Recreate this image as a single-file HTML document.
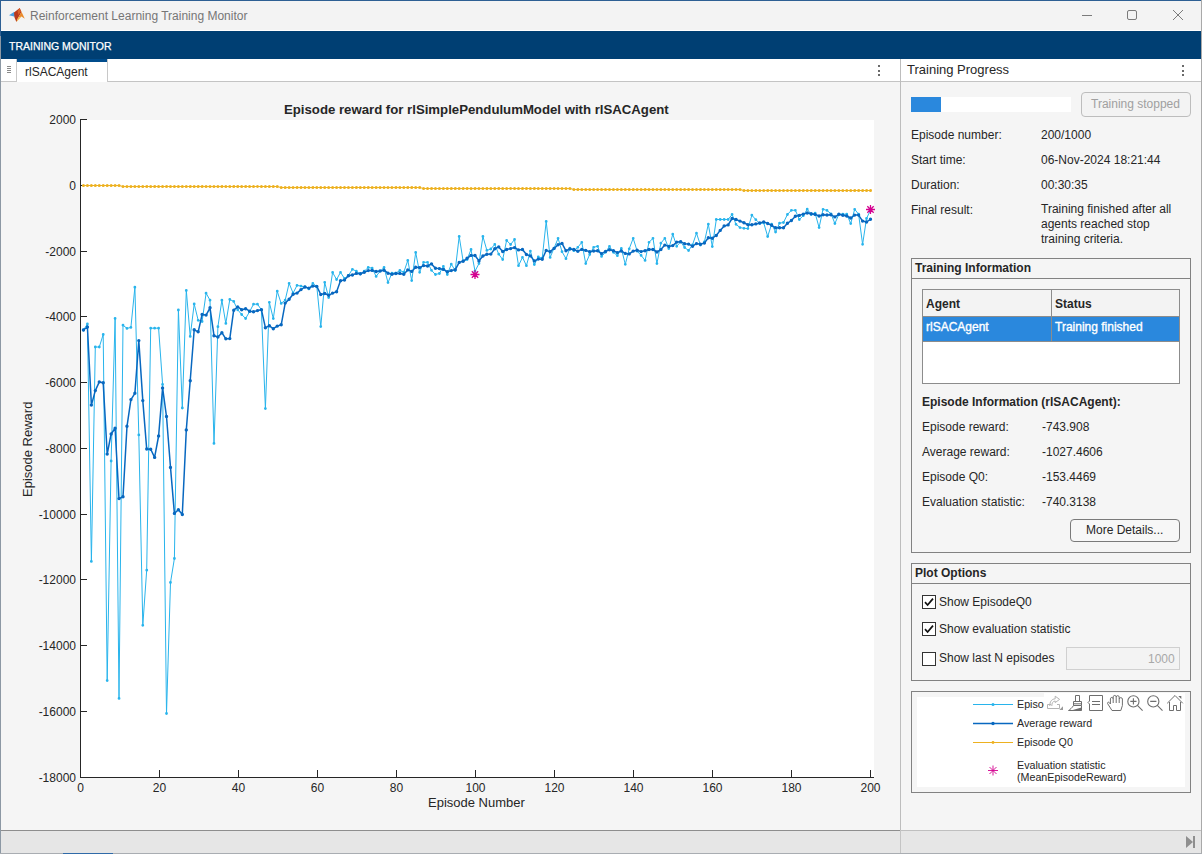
<!DOCTYPE html>
<html><head><meta charset="utf-8">
<style>
*{margin:0;padding:0;box-sizing:border-box}
html,body{width:1202px;height:854px;overflow:hidden;background:#f3f3f3;font-family:"Liberation Sans",sans-serif;color:#262626}
.a{position:absolute}
.t{position:absolute;white-space:nowrap;line-height:1}
.f12{font-size:12px}
.b{font-weight:bold}
</style></head><body>
<!-- window border -->
<div class="a" style="left:0;top:0;width:1202px;height:1px;background:#2d5f93"></div>
<div class="a" style="left:0;top:0;width:1px;height:854px;background:#8c98a4"></div>
<div class="a" style="left:0;top:0;width:1px;height:36px;background:#2d5f93"></div>
<div class="a" style="left:1201px;top:0;width:1px;height:854px;background:#a9a9a9"></div>
<!-- title bar -->
<div class="a" style="left:1px;top:1px;width:1200px;height:29px;background:#f3f3f3"></div>
<div class="a" style="left:1px;top:30px;width:1200px;height:1px;background:#ffffff"></div>
<svg class="a" style="left:0;top:0" width="30" height="30" viewBox="0 0 30 30">
 <path d="M9 15.3L14 12L16 13.8L15 16.8Z" fill="#4a9ee0"/>
 <path d="M14 12.5L19.7 8L21.5 12L18 18L16.4 22L14.5 17.5Z" fill="#b9391d"/>
 <path d="M19.7 8L24.8 18.7L21.5 16.5L18 18L21.5 12Z" fill="#ea8a2b"/>
 <path d="M16.4 22L18 18L21.5 16.5Z" fill="#f6b836"/>
 <path d="M17.5 11L19.7 8L20.8 11.5L18.5 15Z" fill="#d9622a"/>
</svg>
<div class="t f12" style="left:30px;top:10px;color:#767676">Reinforcement Learning Training Monitor</div>
<!-- window controls -->
<div class="a" style="left:1082px;top:15px;width:10px;height:1px;background:#7b7b7b"></div>
<div class="a" style="left:1127px;top:10px;width:10px;height:10px;border:1px solid #7b7b7b;border-radius:2px"></div>
<svg class="a" style="left:1172px;top:9px" width="12" height="12" viewBox="0 0 12 12"><path d="M1 1 L11 11 M11 1 L1 11" stroke="#7b7b7b" stroke-width="1"/></svg>
<!-- toolstrip band -->
<div class="a" style="left:1px;top:31px;width:1200px;height:28px;background:#003f73"></div>
<div class="t" style="left:9px;top:40.6px;font-size:10.5px;color:#ffffff;-webkit-text-stroke:0.25px #fff">TRAINING MONITOR</div>

<!-- document area -->
<div class="a" style="left:1px;top:59px;width:899px;height:771px;background:#f5f5f5"></div>
<div class="a" style="left:1px;top:59px;width:899px;height:22px;background:#ffffff"></div>
<div class="a" style="left:1px;top:81px;width:899px;height:1px;background:#c4c4c4"></div>
<!-- grip -->
<div class="a" style="left:1px;top:59px;width:16px;height:23px;background:#fff;border-right:1px solid #c8c8c8;border-bottom:1px solid #c8c8c8"></div>
<div class="a" style="left:7px;top:66px;width:4px;height:1px;background:#8a8a8a"></div>
<div class="a" style="left:7px;top:68px;width:4px;height:1px;background:#8a8a8a"></div>
<div class="a" style="left:7px;top:70px;width:4px;height:1px;background:#8a8a8a"></div>
<div class="a" style="left:7px;top:72px;width:4px;height:1px;background:#8a8a8a"></div>
<!-- tab -->
<div class="a" style="left:17px;top:59px;width:91px;height:23px;background:#fff;border-right:1px solid #c8c8c8"></div>
<div class="a" style="left:17px;top:59px;width:90px;height:3px;background:#004c8c"></div>
<div class="t f12" style="left:25px;top:66px;color:#262626">rlSACAgent</div>
<!-- kebab -->
<div class="a" style="left:878px;top:65px;width:2px;height:2px;background:#6a6a6a"></div>
<div class="a" style="left:878px;top:70px;width:2px;height:2px;background:#6a6a6a"></div>
<div class="a" style="left:878px;top:74px;width:2px;height:2px;background:#6a6a6a"></div>

<svg class="a" style="left:0;top:0" width="1202" height="854" viewBox="0 0 1202 854"><rect x="80" y="120" width="794" height="658" fill="#ffffff"/><path d="M80.5 119V777.5H874M80.5 777V770M159.5 777V770M238.5 777V770M317.5 777V770M396.5 777V770M475.5 777V770M554.5 777V770M633.5 777V770M712.5 777V770M791.5 777V770M870.5 777V770M80 119.5H87M80 185.5H87M80 251.5H87M80 316.5H87M80 382.5H87M80 448.5H87M80 514.5H87M80 579.5H87M80 645.5H87M80 711.5H87M80 777.5H87" stroke="#262626" stroke-width="1" fill="none"/><g font-family="Liberation Sans" font-size="12" fill="#262626"><text x="80.5" y="792" text-anchor="middle">0</text><text x="159.5" y="792" text-anchor="middle">20</text><text x="238.5" y="792" text-anchor="middle">40</text><text x="317.5" y="792" text-anchor="middle">60</text><text x="396.5" y="792" text-anchor="middle">80</text><text x="475.5" y="792" text-anchor="middle">100</text><text x="554.5" y="792" text-anchor="middle">120</text><text x="633.5" y="792" text-anchor="middle">140</text><text x="712.5" y="792" text-anchor="middle">160</text><text x="791.5" y="792" text-anchor="middle">180</text><text x="870.5" y="792" text-anchor="middle">200</text><text x="76" y="123.8" text-anchor="end">2000</text><text x="76" y="189.8" text-anchor="end">0</text><text x="76" y="255.8" text-anchor="end">-2000</text><text x="76" y="320.8" text-anchor="end">-4000</text><text x="76" y="386.8" text-anchor="end">-6000</text><text x="76" y="452.8" text-anchor="end">-8000</text><text x="76" y="518.8" text-anchor="end">-10000</text><text x="76" y="583.8" text-anchor="end">-12000</text><text x="76" y="649.8" text-anchor="end">-14000</text><text x="76" y="715.8" text-anchor="end">-16000</text><text x="76" y="781.8" text-anchor="end">-18000</text></g><polyline points="83.5,330.0 87.4,324.0 91.4,561.4 95.3,347.0 99.3,347.0 103.2,334.5 107.2,680.6 111.1,461.0 115.1,318.4 119.0,698.4 123.0,325.2 127.0,328.4 130.9,327.4 134.9,287.2 138.8,434.9 142.8,625.3 146.7,570.2 150.7,328.2 154.6,328.2 158.6,328.2 162.6,384.5 166.5,713.5 170.5,582.5 174.4,558.5 178.4,310.0 182.3,408.0 186.3,290.4 190.2,336.4 194.2,304.0 198.2,320.3 202.1,321.5 206.1,293.2 210.0,300.2 214.0,443.4 217.9,326.7 221.9,300.2 225.8,323.4 229.8,299.5 233.7,301.4 237.7,309.8 241.7,314.5 245.6,318.5 249.6,311.7 253.5,304.2 257.5,304.2 261.4,309.8 265.4,408.6 269.3,302.3 273.3,318.6 277.2,291.2 281.2,303.4 285.2,300.1 289.1,283.3 293.1,293.1 297.0,285.4 301.0,286.1 304.9,287.0 308.9,288.9 312.8,283.3 316.8,286.5 320.8,326.6 324.7,282.3 328.7,297.6 332.6,272.5 336.6,279.5 340.5,272.3 344.5,278.5 348.4,275.5 352.4,269.3 356.4,271.2 360.3,274.0 364.3,271.2 368.2,267.5 372.2,268.2 376.1,276.4 380.1,271.2 384.0,267.5 388.0,282.6 391.9,273.1 395.9,273.1 399.9,270.5 403.8,272.2 407.8,260.4 411.7,280.6 415.7,252.5 419.6,272.3 423.6,262.3 427.5,262.3 431.5,270.3 435.4,274.5 439.4,273.5 443.4,266.3 447.3,274.5 451.3,264.2 455.2,270.5 459.2,236.4 463.1,260.9 467.1,259.5 471.0,249.5 475.0,271.2 479.0,263.5 482.9,236.4 486.9,250.4 490.8,249.0 494.8,244.3 498.7,254.2 502.7,259.5 506.6,240.4 510.6,244.5 514.5,239.5 518.5,265.7 522.5,257.3 526.4,265.7 530.4,251.1 534.3,264.5 538.3,257.0 542.2,258.2 546.2,221.4 550.1,257.4 554.1,248.1 558.1,238.3 562.0,251.7 566.0,258.7 569.9,248.2 573.9,250.7 577.8,247.3 581.8,242.3 585.7,263.6 589.7,254.5 593.6,247.3 597.6,246.3 601.6,256.4 605.5,252.3 609.5,246.3 613.4,252.3 617.4,255.7 621.3,248.5 625.3,264.3 629.2,248.8 633.2,238.3 637.2,251.2 641.1,255.4 645.1,260.4 649.0,242.3 653.0,238.3 656.9,263.6 660.9,243.2 664.8,238.3 668.8,248.6 672.8,234.2 676.7,246.3 680.7,241.8 684.6,247.5 688.6,250.5 692.5,244.8 696.5,233.2 700.4,245.0 704.4,242.0 708.3,224.2 712.3,246.6 716.3,219.5 720.2,219.5 724.2,219.5 728.1,219.5 732.1,214.5 736.0,224.3 740.0,227.6 743.9,228.3 747.9,228.6 751.9,215.2 755.8,219.7 759.8,223.4 763.7,222.8 767.7,236.5 771.6,224.2 775.6,232.0 779.5,223.2 783.5,222.5 787.4,214.5 791.4,210.3 795.4,210.3 799.3,219.5 803.3,215.7 807.2,209.2 811.2,214.5 815.1,213.1 819.1,227.6 823.0,209.3 827.0,210.4 831.0,213.8 834.9,223.5 838.9,214.3 842.8,214.2 846.8,214.2 850.7,223.6 854.7,209.3 858.6,214.2 862.6,244.3 866.5,218.5 870.5,210.1" fill="none" stroke="#28b4ec" stroke-width="1" stroke-linejoin="round"/>
<path d="M82.05 330.0a1.4 1.4 0 1 0 2.8 0a1.4 1.4 0 1 0 -2.8 0M86.01 324.0a1.4 1.4 0 1 0 2.8 0a1.4 1.4 0 1 0 -2.8 0M89.96 561.4a1.4 1.4 0 1 0 2.8 0a1.4 1.4 0 1 0 -2.8 0M93.92 347.0a1.4 1.4 0 1 0 2.8 0a1.4 1.4 0 1 0 -2.8 0M97.88 347.0a1.4 1.4 0 1 0 2.8 0a1.4 1.4 0 1 0 -2.8 0M101.83 334.5a1.4 1.4 0 1 0 2.8 0a1.4 1.4 0 1 0 -2.8 0M105.78 680.6a1.4 1.4 0 1 0 2.8 0a1.4 1.4 0 1 0 -2.8 0M109.74 461.0a1.4 1.4 0 1 0 2.8 0a1.4 1.4 0 1 0 -2.8 0M113.69 318.4a1.4 1.4 0 1 0 2.8 0a1.4 1.4 0 1 0 -2.8 0M117.65 698.4a1.4 1.4 0 1 0 2.8 0a1.4 1.4 0 1 0 -2.8 0M121.60 325.2a1.4 1.4 0 1 0 2.8 0a1.4 1.4 0 1 0 -2.8 0M125.56 328.4a1.4 1.4 0 1 0 2.8 0a1.4 1.4 0 1 0 -2.8 0M129.51 327.4a1.4 1.4 0 1 0 2.8 0a1.4 1.4 0 1 0 -2.8 0M133.47 287.2a1.4 1.4 0 1 0 2.8 0a1.4 1.4 0 1 0 -2.8 0M137.42 434.9a1.4 1.4 0 1 0 2.8 0a1.4 1.4 0 1 0 -2.8 0M141.38 625.3a1.4 1.4 0 1 0 2.8 0a1.4 1.4 0 1 0 -2.8 0M145.34 570.2a1.4 1.4 0 1 0 2.8 0a1.4 1.4 0 1 0 -2.8 0M149.29 328.2a1.4 1.4 0 1 0 2.8 0a1.4 1.4 0 1 0 -2.8 0M153.24 328.2a1.4 1.4 0 1 0 2.8 0a1.4 1.4 0 1 0 -2.8 0M157.20 328.2a1.4 1.4 0 1 0 2.8 0a1.4 1.4 0 1 0 -2.8 0M161.16 384.5a1.4 1.4 0 1 0 2.8 0a1.4 1.4 0 1 0 -2.8 0M165.11 713.5a1.4 1.4 0 1 0 2.8 0a1.4 1.4 0 1 0 -2.8 0M169.06 582.5a1.4 1.4 0 1 0 2.8 0a1.4 1.4 0 1 0 -2.8 0M173.02 558.5a1.4 1.4 0 1 0 2.8 0a1.4 1.4 0 1 0 -2.8 0M176.97 310.0a1.4 1.4 0 1 0 2.8 0a1.4 1.4 0 1 0 -2.8 0M180.93 408.0a1.4 1.4 0 1 0 2.8 0a1.4 1.4 0 1 0 -2.8 0M184.88 290.4a1.4 1.4 0 1 0 2.8 0a1.4 1.4 0 1 0 -2.8 0M188.84 336.4a1.4 1.4 0 1 0 2.8 0a1.4 1.4 0 1 0 -2.8 0M192.79 304.0a1.4 1.4 0 1 0 2.8 0a1.4 1.4 0 1 0 -2.8 0M196.75 320.3a1.4 1.4 0 1 0 2.8 0a1.4 1.4 0 1 0 -2.8 0M200.71 321.5a1.4 1.4 0 1 0 2.8 0a1.4 1.4 0 1 0 -2.8 0M204.66 293.2a1.4 1.4 0 1 0 2.8 0a1.4 1.4 0 1 0 -2.8 0M208.62 300.2a1.4 1.4 0 1 0 2.8 0a1.4 1.4 0 1 0 -2.8 0M212.57 443.4a1.4 1.4 0 1 0 2.8 0a1.4 1.4 0 1 0 -2.8 0M216.53 326.7a1.4 1.4 0 1 0 2.8 0a1.4 1.4 0 1 0 -2.8 0M220.48 300.2a1.4 1.4 0 1 0 2.8 0a1.4 1.4 0 1 0 -2.8 0M224.44 323.4a1.4 1.4 0 1 0 2.8 0a1.4 1.4 0 1 0 -2.8 0M228.39 299.5a1.4 1.4 0 1 0 2.8 0a1.4 1.4 0 1 0 -2.8 0M232.34 301.4a1.4 1.4 0 1 0 2.8 0a1.4 1.4 0 1 0 -2.8 0M236.30 309.8a1.4 1.4 0 1 0 2.8 0a1.4 1.4 0 1 0 -2.8 0M240.25 314.5a1.4 1.4 0 1 0 2.8 0a1.4 1.4 0 1 0 -2.8 0M244.21 318.5a1.4 1.4 0 1 0 2.8 0a1.4 1.4 0 1 0 -2.8 0M248.16 311.7a1.4 1.4 0 1 0 2.8 0a1.4 1.4 0 1 0 -2.8 0M252.12 304.2a1.4 1.4 0 1 0 2.8 0a1.4 1.4 0 1 0 -2.8 0M256.08 304.2a1.4 1.4 0 1 0 2.8 0a1.4 1.4 0 1 0 -2.8 0M260.03 309.8a1.4 1.4 0 1 0 2.8 0a1.4 1.4 0 1 0 -2.8 0M263.99 408.6a1.4 1.4 0 1 0 2.8 0a1.4 1.4 0 1 0 -2.8 0M267.94 302.3a1.4 1.4 0 1 0 2.8 0a1.4 1.4 0 1 0 -2.8 0M271.90 318.6a1.4 1.4 0 1 0 2.8 0a1.4 1.4 0 1 0 -2.8 0M275.85 291.2a1.4 1.4 0 1 0 2.8 0a1.4 1.4 0 1 0 -2.8 0M279.81 303.4a1.4 1.4 0 1 0 2.8 0a1.4 1.4 0 1 0 -2.8 0M283.76 300.1a1.4 1.4 0 1 0 2.8 0a1.4 1.4 0 1 0 -2.8 0M287.72 283.3a1.4 1.4 0 1 0 2.8 0a1.4 1.4 0 1 0 -2.8 0M291.67 293.1a1.4 1.4 0 1 0 2.8 0a1.4 1.4 0 1 0 -2.8 0M295.62 285.4a1.4 1.4 0 1 0 2.8 0a1.4 1.4 0 1 0 -2.8 0M299.58 286.1a1.4 1.4 0 1 0 2.8 0a1.4 1.4 0 1 0 -2.8 0M303.54 287.0a1.4 1.4 0 1 0 2.8 0a1.4 1.4 0 1 0 -2.8 0M307.49 288.9a1.4 1.4 0 1 0 2.8 0a1.4 1.4 0 1 0 -2.8 0M311.45 283.3a1.4 1.4 0 1 0 2.8 0a1.4 1.4 0 1 0 -2.8 0M315.40 286.5a1.4 1.4 0 1 0 2.8 0a1.4 1.4 0 1 0 -2.8 0M319.36 326.6a1.4 1.4 0 1 0 2.8 0a1.4 1.4 0 1 0 -2.8 0M323.31 282.3a1.4 1.4 0 1 0 2.8 0a1.4 1.4 0 1 0 -2.8 0M327.26 297.6a1.4 1.4 0 1 0 2.8 0a1.4 1.4 0 1 0 -2.8 0M331.22 272.5a1.4 1.4 0 1 0 2.8 0a1.4 1.4 0 1 0 -2.8 0M335.18 279.5a1.4 1.4 0 1 0 2.8 0a1.4 1.4 0 1 0 -2.8 0M339.13 272.3a1.4 1.4 0 1 0 2.8 0a1.4 1.4 0 1 0 -2.8 0M343.09 278.5a1.4 1.4 0 1 0 2.8 0a1.4 1.4 0 1 0 -2.8 0M347.04 275.5a1.4 1.4 0 1 0 2.8 0a1.4 1.4 0 1 0 -2.8 0M351.00 269.3a1.4 1.4 0 1 0 2.8 0a1.4 1.4 0 1 0 -2.8 0M354.95 271.2a1.4 1.4 0 1 0 2.8 0a1.4 1.4 0 1 0 -2.8 0M358.91 274.0a1.4 1.4 0 1 0 2.8 0a1.4 1.4 0 1 0 -2.8 0M362.86 271.2a1.4 1.4 0 1 0 2.8 0a1.4 1.4 0 1 0 -2.8 0M366.82 267.5a1.4 1.4 0 1 0 2.8 0a1.4 1.4 0 1 0 -2.8 0M370.77 268.2a1.4 1.4 0 1 0 2.8 0a1.4 1.4 0 1 0 -2.8 0M374.73 276.4a1.4 1.4 0 1 0 2.8 0a1.4 1.4 0 1 0 -2.8 0M378.68 271.2a1.4 1.4 0 1 0 2.8 0a1.4 1.4 0 1 0 -2.8 0M382.64 267.5a1.4 1.4 0 1 0 2.8 0a1.4 1.4 0 1 0 -2.8 0M386.59 282.6a1.4 1.4 0 1 0 2.8 0a1.4 1.4 0 1 0 -2.8 0M390.55 273.1a1.4 1.4 0 1 0 2.8 0a1.4 1.4 0 1 0 -2.8 0M394.50 273.1a1.4 1.4 0 1 0 2.8 0a1.4 1.4 0 1 0 -2.8 0M398.46 270.5a1.4 1.4 0 1 0 2.8 0a1.4 1.4 0 1 0 -2.8 0M402.41 272.2a1.4 1.4 0 1 0 2.8 0a1.4 1.4 0 1 0 -2.8 0M406.37 260.4a1.4 1.4 0 1 0 2.8 0a1.4 1.4 0 1 0 -2.8 0M410.32 280.6a1.4 1.4 0 1 0 2.8 0a1.4 1.4 0 1 0 -2.8 0M414.28 252.5a1.4 1.4 0 1 0 2.8 0a1.4 1.4 0 1 0 -2.8 0M418.23 272.3a1.4 1.4 0 1 0 2.8 0a1.4 1.4 0 1 0 -2.8 0M422.19 262.3a1.4 1.4 0 1 0 2.8 0a1.4 1.4 0 1 0 -2.8 0M426.14 262.3a1.4 1.4 0 1 0 2.8 0a1.4 1.4 0 1 0 -2.8 0M430.10 270.3a1.4 1.4 0 1 0 2.8 0a1.4 1.4 0 1 0 -2.8 0M434.05 274.5a1.4 1.4 0 1 0 2.8 0a1.4 1.4 0 1 0 -2.8 0M438.01 273.5a1.4 1.4 0 1 0 2.8 0a1.4 1.4 0 1 0 -2.8 0M441.96 266.3a1.4 1.4 0 1 0 2.8 0a1.4 1.4 0 1 0 -2.8 0M445.92 274.5a1.4 1.4 0 1 0 2.8 0a1.4 1.4 0 1 0 -2.8 0M449.87 264.2a1.4 1.4 0 1 0 2.8 0a1.4 1.4 0 1 0 -2.8 0M453.83 270.5a1.4 1.4 0 1 0 2.8 0a1.4 1.4 0 1 0 -2.8 0M457.78 236.4a1.4 1.4 0 1 0 2.8 0a1.4 1.4 0 1 0 -2.8 0M461.74 260.9a1.4 1.4 0 1 0 2.8 0a1.4 1.4 0 1 0 -2.8 0M465.69 259.5a1.4 1.4 0 1 0 2.8 0a1.4 1.4 0 1 0 -2.8 0M469.65 249.5a1.4 1.4 0 1 0 2.8 0a1.4 1.4 0 1 0 -2.8 0M473.60 271.2a1.4 1.4 0 1 0 2.8 0a1.4 1.4 0 1 0 -2.8 0M477.56 263.5a1.4 1.4 0 1 0 2.8 0a1.4 1.4 0 1 0 -2.8 0M481.51 236.4a1.4 1.4 0 1 0 2.8 0a1.4 1.4 0 1 0 -2.8 0M485.47 250.4a1.4 1.4 0 1 0 2.8 0a1.4 1.4 0 1 0 -2.8 0M489.42 249.0a1.4 1.4 0 1 0 2.8 0a1.4 1.4 0 1 0 -2.8 0M493.38 244.3a1.4 1.4 0 1 0 2.8 0a1.4 1.4 0 1 0 -2.8 0M497.33 254.2a1.4 1.4 0 1 0 2.8 0a1.4 1.4 0 1 0 -2.8 0M501.29 259.5a1.4 1.4 0 1 0 2.8 0a1.4 1.4 0 1 0 -2.8 0M505.24 240.4a1.4 1.4 0 1 0 2.8 0a1.4 1.4 0 1 0 -2.8 0M509.20 244.5a1.4 1.4 0 1 0 2.8 0a1.4 1.4 0 1 0 -2.8 0M513.15 239.5a1.4 1.4 0 1 0 2.8 0a1.4 1.4 0 1 0 -2.8 0M517.11 265.7a1.4 1.4 0 1 0 2.8 0a1.4 1.4 0 1 0 -2.8 0M521.06 257.3a1.4 1.4 0 1 0 2.8 0a1.4 1.4 0 1 0 -2.8 0M525.01 265.7a1.4 1.4 0 1 0 2.8 0a1.4 1.4 0 1 0 -2.8 0M528.97 251.1a1.4 1.4 0 1 0 2.8 0a1.4 1.4 0 1 0 -2.8 0M532.93 264.5a1.4 1.4 0 1 0 2.8 0a1.4 1.4 0 1 0 -2.8 0M536.88 257.0a1.4 1.4 0 1 0 2.8 0a1.4 1.4 0 1 0 -2.8 0M540.84 258.2a1.4 1.4 0 1 0 2.8 0a1.4 1.4 0 1 0 -2.8 0M544.79 221.4a1.4 1.4 0 1 0 2.8 0a1.4 1.4 0 1 0 -2.8 0M548.75 257.4a1.4 1.4 0 1 0 2.8 0a1.4 1.4 0 1 0 -2.8 0M552.70 248.1a1.4 1.4 0 1 0 2.8 0a1.4 1.4 0 1 0 -2.8 0M556.66 238.3a1.4 1.4 0 1 0 2.8 0a1.4 1.4 0 1 0 -2.8 0M560.61 251.7a1.4 1.4 0 1 0 2.8 0a1.4 1.4 0 1 0 -2.8 0M564.57 258.7a1.4 1.4 0 1 0 2.8 0a1.4 1.4 0 1 0 -2.8 0M568.52 248.2a1.4 1.4 0 1 0 2.8 0a1.4 1.4 0 1 0 -2.8 0M572.48 250.7a1.4 1.4 0 1 0 2.8 0a1.4 1.4 0 1 0 -2.8 0M576.43 247.3a1.4 1.4 0 1 0 2.8 0a1.4 1.4 0 1 0 -2.8 0M580.39 242.3a1.4 1.4 0 1 0 2.8 0a1.4 1.4 0 1 0 -2.8 0M584.34 263.6a1.4 1.4 0 1 0 2.8 0a1.4 1.4 0 1 0 -2.8 0M588.29 254.5a1.4 1.4 0 1 0 2.8 0a1.4 1.4 0 1 0 -2.8 0M592.25 247.3a1.4 1.4 0 1 0 2.8 0a1.4 1.4 0 1 0 -2.8 0M596.21 246.3a1.4 1.4 0 1 0 2.8 0a1.4 1.4 0 1 0 -2.8 0M600.16 256.4a1.4 1.4 0 1 0 2.8 0a1.4 1.4 0 1 0 -2.8 0M604.12 252.3a1.4 1.4 0 1 0 2.8 0a1.4 1.4 0 1 0 -2.8 0M608.07 246.3a1.4 1.4 0 1 0 2.8 0a1.4 1.4 0 1 0 -2.8 0M612.02 252.3a1.4 1.4 0 1 0 2.8 0a1.4 1.4 0 1 0 -2.8 0M615.98 255.7a1.4 1.4 0 1 0 2.8 0a1.4 1.4 0 1 0 -2.8 0M619.94 248.5a1.4 1.4 0 1 0 2.8 0a1.4 1.4 0 1 0 -2.8 0M623.89 264.3a1.4 1.4 0 1 0 2.8 0a1.4 1.4 0 1 0 -2.8 0M627.85 248.8a1.4 1.4 0 1 0 2.8 0a1.4 1.4 0 1 0 -2.8 0M631.80 238.3a1.4 1.4 0 1 0 2.8 0a1.4 1.4 0 1 0 -2.8 0M635.75 251.2a1.4 1.4 0 1 0 2.8 0a1.4 1.4 0 1 0 -2.8 0M639.71 255.4a1.4 1.4 0 1 0 2.8 0a1.4 1.4 0 1 0 -2.8 0M643.67 260.4a1.4 1.4 0 1 0 2.8 0a1.4 1.4 0 1 0 -2.8 0M647.62 242.3a1.4 1.4 0 1 0 2.8 0a1.4 1.4 0 1 0 -2.8 0M651.58 238.3a1.4 1.4 0 1 0 2.8 0a1.4 1.4 0 1 0 -2.8 0M655.53 263.6a1.4 1.4 0 1 0 2.8 0a1.4 1.4 0 1 0 -2.8 0M659.49 243.2a1.4 1.4 0 1 0 2.8 0a1.4 1.4 0 1 0 -2.8 0M663.44 238.3a1.4 1.4 0 1 0 2.8 0a1.4 1.4 0 1 0 -2.8 0M667.39 248.6a1.4 1.4 0 1 0 2.8 0a1.4 1.4 0 1 0 -2.8 0M671.35 234.2a1.4 1.4 0 1 0 2.8 0a1.4 1.4 0 1 0 -2.8 0M675.31 246.3a1.4 1.4 0 1 0 2.8 0a1.4 1.4 0 1 0 -2.8 0M679.26 241.8a1.4 1.4 0 1 0 2.8 0a1.4 1.4 0 1 0 -2.8 0M683.22 247.5a1.4 1.4 0 1 0 2.8 0a1.4 1.4 0 1 0 -2.8 0M687.17 250.5a1.4 1.4 0 1 0 2.8 0a1.4 1.4 0 1 0 -2.8 0M691.12 244.8a1.4 1.4 0 1 0 2.8 0a1.4 1.4 0 1 0 -2.8 0M695.08 233.2a1.4 1.4 0 1 0 2.8 0a1.4 1.4 0 1 0 -2.8 0M699.04 245.0a1.4 1.4 0 1 0 2.8 0a1.4 1.4 0 1 0 -2.8 0M702.99 242.0a1.4 1.4 0 1 0 2.8 0a1.4 1.4 0 1 0 -2.8 0M706.95 224.2a1.4 1.4 0 1 0 2.8 0a1.4 1.4 0 1 0 -2.8 0M710.90 246.6a1.4 1.4 0 1 0 2.8 0a1.4 1.4 0 1 0 -2.8 0M714.86 219.5a1.4 1.4 0 1 0 2.8 0a1.4 1.4 0 1 0 -2.8 0M718.81 219.5a1.4 1.4 0 1 0 2.8 0a1.4 1.4 0 1 0 -2.8 0M722.76 219.5a1.4 1.4 0 1 0 2.8 0a1.4 1.4 0 1 0 -2.8 0M726.72 219.5a1.4 1.4 0 1 0 2.8 0a1.4 1.4 0 1 0 -2.8 0M730.68 214.5a1.4 1.4 0 1 0 2.8 0a1.4 1.4 0 1 0 -2.8 0M734.63 224.3a1.4 1.4 0 1 0 2.8 0a1.4 1.4 0 1 0 -2.8 0M738.59 227.6a1.4 1.4 0 1 0 2.8 0a1.4 1.4 0 1 0 -2.8 0M742.54 228.3a1.4 1.4 0 1 0 2.8 0a1.4 1.4 0 1 0 -2.8 0M746.50 228.6a1.4 1.4 0 1 0 2.8 0a1.4 1.4 0 1 0 -2.8 0M750.45 215.2a1.4 1.4 0 1 0 2.8 0a1.4 1.4 0 1 0 -2.8 0M754.41 219.7a1.4 1.4 0 1 0 2.8 0a1.4 1.4 0 1 0 -2.8 0M758.36 223.4a1.4 1.4 0 1 0 2.8 0a1.4 1.4 0 1 0 -2.8 0M762.32 222.8a1.4 1.4 0 1 0 2.8 0a1.4 1.4 0 1 0 -2.8 0M766.27 236.5a1.4 1.4 0 1 0 2.8 0a1.4 1.4 0 1 0 -2.8 0M770.23 224.2a1.4 1.4 0 1 0 2.8 0a1.4 1.4 0 1 0 -2.8 0M774.18 232.0a1.4 1.4 0 1 0 2.8 0a1.4 1.4 0 1 0 -2.8 0M778.13 223.2a1.4 1.4 0 1 0 2.8 0a1.4 1.4 0 1 0 -2.8 0M782.09 222.5a1.4 1.4 0 1 0 2.8 0a1.4 1.4 0 1 0 -2.8 0M786.05 214.5a1.4 1.4 0 1 0 2.8 0a1.4 1.4 0 1 0 -2.8 0M790.00 210.3a1.4 1.4 0 1 0 2.8 0a1.4 1.4 0 1 0 -2.8 0M793.96 210.3a1.4 1.4 0 1 0 2.8 0a1.4 1.4 0 1 0 -2.8 0M797.91 219.5a1.4 1.4 0 1 0 2.8 0a1.4 1.4 0 1 0 -2.8 0M801.87 215.7a1.4 1.4 0 1 0 2.8 0a1.4 1.4 0 1 0 -2.8 0M805.82 209.2a1.4 1.4 0 1 0 2.8 0a1.4 1.4 0 1 0 -2.8 0M809.78 214.5a1.4 1.4 0 1 0 2.8 0a1.4 1.4 0 1 0 -2.8 0M813.73 213.1a1.4 1.4 0 1 0 2.8 0a1.4 1.4 0 1 0 -2.8 0M817.69 227.6a1.4 1.4 0 1 0 2.8 0a1.4 1.4 0 1 0 -2.8 0M821.64 209.3a1.4 1.4 0 1 0 2.8 0a1.4 1.4 0 1 0 -2.8 0M825.60 210.4a1.4 1.4 0 1 0 2.8 0a1.4 1.4 0 1 0 -2.8 0M829.55 213.8a1.4 1.4 0 1 0 2.8 0a1.4 1.4 0 1 0 -2.8 0M833.50 223.5a1.4 1.4 0 1 0 2.8 0a1.4 1.4 0 1 0 -2.8 0M837.46 214.3a1.4 1.4 0 1 0 2.8 0a1.4 1.4 0 1 0 -2.8 0M841.42 214.2a1.4 1.4 0 1 0 2.8 0a1.4 1.4 0 1 0 -2.8 0M845.37 214.2a1.4 1.4 0 1 0 2.8 0a1.4 1.4 0 1 0 -2.8 0M849.33 223.6a1.4 1.4 0 1 0 2.8 0a1.4 1.4 0 1 0 -2.8 0M853.28 209.3a1.4 1.4 0 1 0 2.8 0a1.4 1.4 0 1 0 -2.8 0M857.24 214.2a1.4 1.4 0 1 0 2.8 0a1.4 1.4 0 1 0 -2.8 0M861.19 244.3a1.4 1.4 0 1 0 2.8 0a1.4 1.4 0 1 0 -2.8 0M865.14 218.5a1.4 1.4 0 1 0 2.8 0a1.4 1.4 0 1 0 -2.8 0M869.10 210.1a1.4 1.4 0 1 0 2.8 0a1.4 1.4 0 1 0 -2.8 0" fill="#28b4ec"/>
<polyline points="83.5,330.0 87.4,327.0 91.4,405.1 95.3,390.6 99.3,381.9 103.2,382.8 107.2,454.1 111.1,434.0 115.1,428.3 119.0,498.6 123.0,496.7 127.0,426.3 130.9,399.6 134.9,393.3 138.8,340.6 142.8,400.6 146.7,449.0 150.7,449.2 154.6,457.4 158.6,436.0 162.6,387.9 166.5,416.5 170.5,467.4 174.4,513.4 178.4,509.8 182.3,514.5 186.3,429.9 190.2,380.7 194.2,329.8 198.2,331.8 202.1,314.5 206.1,315.1 210.0,307.8 214.0,335.7 217.9,337.0 221.9,332.7 225.8,338.8 229.8,338.6 233.7,310.2 237.7,306.9 241.7,309.7 245.6,308.7 249.6,311.2 253.5,311.7 257.5,310.6 261.4,309.7 265.4,327.7 269.3,325.8 273.3,328.7 277.2,326.1 281.2,324.8 285.2,303.1 289.1,299.3 293.1,294.2 297.0,293.1 301.0,289.6 304.9,287.0 308.9,288.1 312.8,286.1 316.8,286.4 320.8,294.5 324.7,293.5 328.7,295.3 332.6,293.1 336.6,291.7 340.5,280.8 344.5,280.1 348.4,275.7 352.4,275.0 356.4,273.4 360.3,273.7 364.3,272.2 368.2,270.6 372.2,270.4 376.1,271.5 380.1,270.9 384.0,270.2 388.0,273.2 391.9,274.2 395.9,273.5 399.9,273.4 403.8,274.3 407.8,269.9 411.7,271.4 415.7,267.2 419.6,267.6 423.6,265.6 427.5,266.0 431.5,263.9 435.4,268.3 439.4,268.6 443.4,269.4 447.3,271.8 451.3,270.6 455.2,269.8 459.2,262.4 463.1,261.3 467.1,258.3 471.0,255.4 475.0,255.5 479.0,260.9 482.9,256.0 486.9,254.2 490.8,254.1 494.8,248.7 498.7,246.9 502.7,251.5 506.6,249.5 510.6,248.6 514.5,247.6 518.5,249.9 522.5,249.5 526.4,254.5 530.4,255.9 534.3,260.9 538.3,259.1 542.2,259.3 546.2,250.4 550.1,251.7 554.1,248.4 558.1,244.7 562.0,243.4 566.0,250.8 569.9,249.0 573.9,249.5 577.8,251.3 581.8,249.4 585.7,250.4 589.7,251.7 593.6,251.0 597.6,250.8 601.6,253.6 605.5,251.4 609.5,249.7 613.4,250.7 617.4,252.6 621.3,251.0 625.3,253.4 629.2,253.9 633.2,251.1 637.2,250.2 641.1,251.6 645.1,250.8 649.0,249.5 653.0,249.5 656.9,252.0 660.9,249.6 664.8,245.1 668.8,246.4 672.8,245.6 676.7,242.1 680.7,241.8 684.6,243.7 688.6,244.1 692.5,246.2 696.5,243.6 700.4,244.2 704.4,243.1 708.3,237.8 712.3,238.2 716.3,235.5 720.2,230.4 724.2,225.9 728.1,224.9 732.1,218.5 736.0,219.5 740.0,221.1 743.9,222.8 747.9,224.7 751.9,224.8 755.8,223.9 759.8,223.0 763.7,221.9 767.7,223.5 771.6,225.3 775.6,227.8 779.5,227.7 783.5,227.7 787.4,223.3 791.4,220.5 795.4,216.2 799.3,215.4 803.3,214.1 807.2,213.0 811.2,213.8 815.1,214.4 819.1,216.0 823.0,214.7 827.0,215.0 831.0,214.8 834.9,216.9 838.9,214.3 842.8,215.2 846.8,216.0 850.7,218.0 854.7,215.1 858.6,215.1 862.6,221.1 866.5,222.0 870.5,219.3" fill="none" stroke="#0868c0" stroke-width="1.5" stroke-linejoin="round"/>
<path d="M81.75 330.0a1.7 1.7 0 1 0 3.4 0a1.7 1.7 0 1 0 -3.4 0M85.71 327.0a1.7 1.7 0 1 0 3.4 0a1.7 1.7 0 1 0 -3.4 0M89.66 405.1a1.7 1.7 0 1 0 3.4 0a1.7 1.7 0 1 0 -3.4 0M93.62 390.6a1.7 1.7 0 1 0 3.4 0a1.7 1.7 0 1 0 -3.4 0M97.58 381.9a1.7 1.7 0 1 0 3.4 0a1.7 1.7 0 1 0 -3.4 0M101.53 382.8a1.7 1.7 0 1 0 3.4 0a1.7 1.7 0 1 0 -3.4 0M105.48 454.1a1.7 1.7 0 1 0 3.4 0a1.7 1.7 0 1 0 -3.4 0M109.44 434.0a1.7 1.7 0 1 0 3.4 0a1.7 1.7 0 1 0 -3.4 0M113.39 428.3a1.7 1.7 0 1 0 3.4 0a1.7 1.7 0 1 0 -3.4 0M117.35 498.6a1.7 1.7 0 1 0 3.4 0a1.7 1.7 0 1 0 -3.4 0M121.30 496.7a1.7 1.7 0 1 0 3.4 0a1.7 1.7 0 1 0 -3.4 0M125.26 426.3a1.7 1.7 0 1 0 3.4 0a1.7 1.7 0 1 0 -3.4 0M129.22 399.6a1.7 1.7 0 1 0 3.4 0a1.7 1.7 0 1 0 -3.4 0M133.17 393.3a1.7 1.7 0 1 0 3.4 0a1.7 1.7 0 1 0 -3.4 0M137.12 340.6a1.7 1.7 0 1 0 3.4 0a1.7 1.7 0 1 0 -3.4 0M141.08 400.6a1.7 1.7 0 1 0 3.4 0a1.7 1.7 0 1 0 -3.4 0M145.04 449.0a1.7 1.7 0 1 0 3.4 0a1.7 1.7 0 1 0 -3.4 0M148.99 449.2a1.7 1.7 0 1 0 3.4 0a1.7 1.7 0 1 0 -3.4 0M152.94 457.4a1.7 1.7 0 1 0 3.4 0a1.7 1.7 0 1 0 -3.4 0M156.90 436.0a1.7 1.7 0 1 0 3.4 0a1.7 1.7 0 1 0 -3.4 0M160.86 387.9a1.7 1.7 0 1 0 3.4 0a1.7 1.7 0 1 0 -3.4 0M164.81 416.5a1.7 1.7 0 1 0 3.4 0a1.7 1.7 0 1 0 -3.4 0M168.77 467.4a1.7 1.7 0 1 0 3.4 0a1.7 1.7 0 1 0 -3.4 0M172.72 513.4a1.7 1.7 0 1 0 3.4 0a1.7 1.7 0 1 0 -3.4 0M176.68 509.8a1.7 1.7 0 1 0 3.4 0a1.7 1.7 0 1 0 -3.4 0M180.63 514.5a1.7 1.7 0 1 0 3.4 0a1.7 1.7 0 1 0 -3.4 0M184.59 429.9a1.7 1.7 0 1 0 3.4 0a1.7 1.7 0 1 0 -3.4 0M188.54 380.7a1.7 1.7 0 1 0 3.4 0a1.7 1.7 0 1 0 -3.4 0M192.50 329.8a1.7 1.7 0 1 0 3.4 0a1.7 1.7 0 1 0 -3.4 0M196.45 331.8a1.7 1.7 0 1 0 3.4 0a1.7 1.7 0 1 0 -3.4 0M200.41 314.5a1.7 1.7 0 1 0 3.4 0a1.7 1.7 0 1 0 -3.4 0M204.36 315.1a1.7 1.7 0 1 0 3.4 0a1.7 1.7 0 1 0 -3.4 0M208.32 307.8a1.7 1.7 0 1 0 3.4 0a1.7 1.7 0 1 0 -3.4 0M212.27 335.7a1.7 1.7 0 1 0 3.4 0a1.7 1.7 0 1 0 -3.4 0M216.23 337.0a1.7 1.7 0 1 0 3.4 0a1.7 1.7 0 1 0 -3.4 0M220.18 332.7a1.7 1.7 0 1 0 3.4 0a1.7 1.7 0 1 0 -3.4 0M224.14 338.8a1.7 1.7 0 1 0 3.4 0a1.7 1.7 0 1 0 -3.4 0M228.09 338.6a1.7 1.7 0 1 0 3.4 0a1.7 1.7 0 1 0 -3.4 0M232.05 310.2a1.7 1.7 0 1 0 3.4 0a1.7 1.7 0 1 0 -3.4 0M236.00 306.9a1.7 1.7 0 1 0 3.4 0a1.7 1.7 0 1 0 -3.4 0M239.96 309.7a1.7 1.7 0 1 0 3.4 0a1.7 1.7 0 1 0 -3.4 0M243.91 308.7a1.7 1.7 0 1 0 3.4 0a1.7 1.7 0 1 0 -3.4 0M247.87 311.2a1.7 1.7 0 1 0 3.4 0a1.7 1.7 0 1 0 -3.4 0M251.82 311.7a1.7 1.7 0 1 0 3.4 0a1.7 1.7 0 1 0 -3.4 0M255.78 310.6a1.7 1.7 0 1 0 3.4 0a1.7 1.7 0 1 0 -3.4 0M259.73 309.7a1.7 1.7 0 1 0 3.4 0a1.7 1.7 0 1 0 -3.4 0M263.69 327.7a1.7 1.7 0 1 0 3.4 0a1.7 1.7 0 1 0 -3.4 0M267.64 325.8a1.7 1.7 0 1 0 3.4 0a1.7 1.7 0 1 0 -3.4 0M271.60 328.7a1.7 1.7 0 1 0 3.4 0a1.7 1.7 0 1 0 -3.4 0M275.55 326.1a1.7 1.7 0 1 0 3.4 0a1.7 1.7 0 1 0 -3.4 0M279.51 324.8a1.7 1.7 0 1 0 3.4 0a1.7 1.7 0 1 0 -3.4 0M283.46 303.1a1.7 1.7 0 1 0 3.4 0a1.7 1.7 0 1 0 -3.4 0M287.42 299.3a1.7 1.7 0 1 0 3.4 0a1.7 1.7 0 1 0 -3.4 0M291.37 294.2a1.7 1.7 0 1 0 3.4 0a1.7 1.7 0 1 0 -3.4 0M295.32 293.1a1.7 1.7 0 1 0 3.4 0a1.7 1.7 0 1 0 -3.4 0M299.28 289.6a1.7 1.7 0 1 0 3.4 0a1.7 1.7 0 1 0 -3.4 0M303.24 287.0a1.7 1.7 0 1 0 3.4 0a1.7 1.7 0 1 0 -3.4 0M307.19 288.1a1.7 1.7 0 1 0 3.4 0a1.7 1.7 0 1 0 -3.4 0M311.15 286.1a1.7 1.7 0 1 0 3.4 0a1.7 1.7 0 1 0 -3.4 0M315.10 286.4a1.7 1.7 0 1 0 3.4 0a1.7 1.7 0 1 0 -3.4 0M319.06 294.5a1.7 1.7 0 1 0 3.4 0a1.7 1.7 0 1 0 -3.4 0M323.01 293.5a1.7 1.7 0 1 0 3.4 0a1.7 1.7 0 1 0 -3.4 0M326.96 295.3a1.7 1.7 0 1 0 3.4 0a1.7 1.7 0 1 0 -3.4 0M330.92 293.1a1.7 1.7 0 1 0 3.4 0a1.7 1.7 0 1 0 -3.4 0M334.88 291.7a1.7 1.7 0 1 0 3.4 0a1.7 1.7 0 1 0 -3.4 0M338.83 280.8a1.7 1.7 0 1 0 3.4 0a1.7 1.7 0 1 0 -3.4 0M342.79 280.1a1.7 1.7 0 1 0 3.4 0a1.7 1.7 0 1 0 -3.4 0M346.74 275.7a1.7 1.7 0 1 0 3.4 0a1.7 1.7 0 1 0 -3.4 0M350.69 275.0a1.7 1.7 0 1 0 3.4 0a1.7 1.7 0 1 0 -3.4 0M354.65 273.4a1.7 1.7 0 1 0 3.4 0a1.7 1.7 0 1 0 -3.4 0M358.61 273.7a1.7 1.7 0 1 0 3.4 0a1.7 1.7 0 1 0 -3.4 0M362.56 272.2a1.7 1.7 0 1 0 3.4 0a1.7 1.7 0 1 0 -3.4 0M366.52 270.6a1.7 1.7 0 1 0 3.4 0a1.7 1.7 0 1 0 -3.4 0M370.47 270.4a1.7 1.7 0 1 0 3.4 0a1.7 1.7 0 1 0 -3.4 0M374.43 271.5a1.7 1.7 0 1 0 3.4 0a1.7 1.7 0 1 0 -3.4 0M378.38 270.9a1.7 1.7 0 1 0 3.4 0a1.7 1.7 0 1 0 -3.4 0M382.34 270.2a1.7 1.7 0 1 0 3.4 0a1.7 1.7 0 1 0 -3.4 0M386.29 273.2a1.7 1.7 0 1 0 3.4 0a1.7 1.7 0 1 0 -3.4 0M390.25 274.2a1.7 1.7 0 1 0 3.4 0a1.7 1.7 0 1 0 -3.4 0M394.20 273.5a1.7 1.7 0 1 0 3.4 0a1.7 1.7 0 1 0 -3.4 0M398.16 273.4a1.7 1.7 0 1 0 3.4 0a1.7 1.7 0 1 0 -3.4 0M402.11 274.3a1.7 1.7 0 1 0 3.4 0a1.7 1.7 0 1 0 -3.4 0M406.06 269.9a1.7 1.7 0 1 0 3.4 0a1.7 1.7 0 1 0 -3.4 0M410.02 271.4a1.7 1.7 0 1 0 3.4 0a1.7 1.7 0 1 0 -3.4 0M413.98 267.2a1.7 1.7 0 1 0 3.4 0a1.7 1.7 0 1 0 -3.4 0M417.93 267.6a1.7 1.7 0 1 0 3.4 0a1.7 1.7 0 1 0 -3.4 0M421.88 265.6a1.7 1.7 0 1 0 3.4 0a1.7 1.7 0 1 0 -3.4 0M425.84 266.0a1.7 1.7 0 1 0 3.4 0a1.7 1.7 0 1 0 -3.4 0M429.80 263.9a1.7 1.7 0 1 0 3.4 0a1.7 1.7 0 1 0 -3.4 0M433.75 268.3a1.7 1.7 0 1 0 3.4 0a1.7 1.7 0 1 0 -3.4 0M437.71 268.6a1.7 1.7 0 1 0 3.4 0a1.7 1.7 0 1 0 -3.4 0M441.66 269.4a1.7 1.7 0 1 0 3.4 0a1.7 1.7 0 1 0 -3.4 0M445.62 271.8a1.7 1.7 0 1 0 3.4 0a1.7 1.7 0 1 0 -3.4 0M449.57 270.6a1.7 1.7 0 1 0 3.4 0a1.7 1.7 0 1 0 -3.4 0M453.53 269.8a1.7 1.7 0 1 0 3.4 0a1.7 1.7 0 1 0 -3.4 0M457.48 262.4a1.7 1.7 0 1 0 3.4 0a1.7 1.7 0 1 0 -3.4 0M461.44 261.3a1.7 1.7 0 1 0 3.4 0a1.7 1.7 0 1 0 -3.4 0M465.39 258.3a1.7 1.7 0 1 0 3.4 0a1.7 1.7 0 1 0 -3.4 0M469.35 255.4a1.7 1.7 0 1 0 3.4 0a1.7 1.7 0 1 0 -3.4 0M473.30 255.5a1.7 1.7 0 1 0 3.4 0a1.7 1.7 0 1 0 -3.4 0M477.25 260.9a1.7 1.7 0 1 0 3.4 0a1.7 1.7 0 1 0 -3.4 0M481.21 256.0a1.7 1.7 0 1 0 3.4 0a1.7 1.7 0 1 0 -3.4 0M485.17 254.2a1.7 1.7 0 1 0 3.4 0a1.7 1.7 0 1 0 -3.4 0M489.12 254.1a1.7 1.7 0 1 0 3.4 0a1.7 1.7 0 1 0 -3.4 0M493.08 248.7a1.7 1.7 0 1 0 3.4 0a1.7 1.7 0 1 0 -3.4 0M497.03 246.9a1.7 1.7 0 1 0 3.4 0a1.7 1.7 0 1 0 -3.4 0M500.99 251.5a1.7 1.7 0 1 0 3.4 0a1.7 1.7 0 1 0 -3.4 0M504.94 249.5a1.7 1.7 0 1 0 3.4 0a1.7 1.7 0 1 0 -3.4 0M508.90 248.6a1.7 1.7 0 1 0 3.4 0a1.7 1.7 0 1 0 -3.4 0M512.85 247.6a1.7 1.7 0 1 0 3.4 0a1.7 1.7 0 1 0 -3.4 0M516.80 249.9a1.7 1.7 0 1 0 3.4 0a1.7 1.7 0 1 0 -3.4 0M520.76 249.5a1.7 1.7 0 1 0 3.4 0a1.7 1.7 0 1 0 -3.4 0M524.71 254.5a1.7 1.7 0 1 0 3.4 0a1.7 1.7 0 1 0 -3.4 0M528.67 255.9a1.7 1.7 0 1 0 3.4 0a1.7 1.7 0 1 0 -3.4 0M532.62 260.9a1.7 1.7 0 1 0 3.4 0a1.7 1.7 0 1 0 -3.4 0M536.58 259.1a1.7 1.7 0 1 0 3.4 0a1.7 1.7 0 1 0 -3.4 0M540.53 259.3a1.7 1.7 0 1 0 3.4 0a1.7 1.7 0 1 0 -3.4 0M544.49 250.4a1.7 1.7 0 1 0 3.4 0a1.7 1.7 0 1 0 -3.4 0M548.44 251.7a1.7 1.7 0 1 0 3.4 0a1.7 1.7 0 1 0 -3.4 0M552.40 248.4a1.7 1.7 0 1 0 3.4 0a1.7 1.7 0 1 0 -3.4 0M556.36 244.7a1.7 1.7 0 1 0 3.4 0a1.7 1.7 0 1 0 -3.4 0M560.31 243.4a1.7 1.7 0 1 0 3.4 0a1.7 1.7 0 1 0 -3.4 0M564.26 250.8a1.7 1.7 0 1 0 3.4 0a1.7 1.7 0 1 0 -3.4 0M568.22 249.0a1.7 1.7 0 1 0 3.4 0a1.7 1.7 0 1 0 -3.4 0M572.17 249.5a1.7 1.7 0 1 0 3.4 0a1.7 1.7 0 1 0 -3.4 0M576.13 251.3a1.7 1.7 0 1 0 3.4 0a1.7 1.7 0 1 0 -3.4 0M580.09 249.4a1.7 1.7 0 1 0 3.4 0a1.7 1.7 0 1 0 -3.4 0M584.04 250.4a1.7 1.7 0 1 0 3.4 0a1.7 1.7 0 1 0 -3.4 0M587.99 251.7a1.7 1.7 0 1 0 3.4 0a1.7 1.7 0 1 0 -3.4 0M591.95 251.0a1.7 1.7 0 1 0 3.4 0a1.7 1.7 0 1 0 -3.4 0M595.90 250.8a1.7 1.7 0 1 0 3.4 0a1.7 1.7 0 1 0 -3.4 0M599.86 253.6a1.7 1.7 0 1 0 3.4 0a1.7 1.7 0 1 0 -3.4 0M603.81 251.4a1.7 1.7 0 1 0 3.4 0a1.7 1.7 0 1 0 -3.4 0M607.77 249.7a1.7 1.7 0 1 0 3.4 0a1.7 1.7 0 1 0 -3.4 0M611.72 250.7a1.7 1.7 0 1 0 3.4 0a1.7 1.7 0 1 0 -3.4 0M615.68 252.6a1.7 1.7 0 1 0 3.4 0a1.7 1.7 0 1 0 -3.4 0M619.63 251.0a1.7 1.7 0 1 0 3.4 0a1.7 1.7 0 1 0 -3.4 0M623.59 253.4a1.7 1.7 0 1 0 3.4 0a1.7 1.7 0 1 0 -3.4 0M627.54 253.9a1.7 1.7 0 1 0 3.4 0a1.7 1.7 0 1 0 -3.4 0M631.50 251.1a1.7 1.7 0 1 0 3.4 0a1.7 1.7 0 1 0 -3.4 0M635.45 250.2a1.7 1.7 0 1 0 3.4 0a1.7 1.7 0 1 0 -3.4 0M639.41 251.6a1.7 1.7 0 1 0 3.4 0a1.7 1.7 0 1 0 -3.4 0M643.37 250.8a1.7 1.7 0 1 0 3.4 0a1.7 1.7 0 1 0 -3.4 0M647.32 249.5a1.7 1.7 0 1 0 3.4 0a1.7 1.7 0 1 0 -3.4 0M651.27 249.5a1.7 1.7 0 1 0 3.4 0a1.7 1.7 0 1 0 -3.4 0M655.23 252.0a1.7 1.7 0 1 0 3.4 0a1.7 1.7 0 1 0 -3.4 0M659.18 249.6a1.7 1.7 0 1 0 3.4 0a1.7 1.7 0 1 0 -3.4 0M663.14 245.1a1.7 1.7 0 1 0 3.4 0a1.7 1.7 0 1 0 -3.4 0M667.09 246.4a1.7 1.7 0 1 0 3.4 0a1.7 1.7 0 1 0 -3.4 0M671.05 245.6a1.7 1.7 0 1 0 3.4 0a1.7 1.7 0 1 0 -3.4 0M675.00 242.1a1.7 1.7 0 1 0 3.4 0a1.7 1.7 0 1 0 -3.4 0M678.96 241.8a1.7 1.7 0 1 0 3.4 0a1.7 1.7 0 1 0 -3.4 0M682.91 243.7a1.7 1.7 0 1 0 3.4 0a1.7 1.7 0 1 0 -3.4 0M686.87 244.1a1.7 1.7 0 1 0 3.4 0a1.7 1.7 0 1 0 -3.4 0M690.82 246.2a1.7 1.7 0 1 0 3.4 0a1.7 1.7 0 1 0 -3.4 0M694.78 243.6a1.7 1.7 0 1 0 3.4 0a1.7 1.7 0 1 0 -3.4 0M698.74 244.2a1.7 1.7 0 1 0 3.4 0a1.7 1.7 0 1 0 -3.4 0M702.69 243.1a1.7 1.7 0 1 0 3.4 0a1.7 1.7 0 1 0 -3.4 0M706.64 237.8a1.7 1.7 0 1 0 3.4 0a1.7 1.7 0 1 0 -3.4 0M710.60 238.2a1.7 1.7 0 1 0 3.4 0a1.7 1.7 0 1 0 -3.4 0M714.55 235.5a1.7 1.7 0 1 0 3.4 0a1.7 1.7 0 1 0 -3.4 0M718.51 230.4a1.7 1.7 0 1 0 3.4 0a1.7 1.7 0 1 0 -3.4 0M722.46 225.9a1.7 1.7 0 1 0 3.4 0a1.7 1.7 0 1 0 -3.4 0M726.42 224.9a1.7 1.7 0 1 0 3.4 0a1.7 1.7 0 1 0 -3.4 0M730.38 218.5a1.7 1.7 0 1 0 3.4 0a1.7 1.7 0 1 0 -3.4 0M734.33 219.5a1.7 1.7 0 1 0 3.4 0a1.7 1.7 0 1 0 -3.4 0M738.28 221.1a1.7 1.7 0 1 0 3.4 0a1.7 1.7 0 1 0 -3.4 0M742.24 222.8a1.7 1.7 0 1 0 3.4 0a1.7 1.7 0 1 0 -3.4 0M746.19 224.7a1.7 1.7 0 1 0 3.4 0a1.7 1.7 0 1 0 -3.4 0M750.15 224.8a1.7 1.7 0 1 0 3.4 0a1.7 1.7 0 1 0 -3.4 0M754.11 223.9a1.7 1.7 0 1 0 3.4 0a1.7 1.7 0 1 0 -3.4 0M758.06 223.0a1.7 1.7 0 1 0 3.4 0a1.7 1.7 0 1 0 -3.4 0M762.01 221.9a1.7 1.7 0 1 0 3.4 0a1.7 1.7 0 1 0 -3.4 0M765.97 223.5a1.7 1.7 0 1 0 3.4 0a1.7 1.7 0 1 0 -3.4 0M769.92 225.3a1.7 1.7 0 1 0 3.4 0a1.7 1.7 0 1 0 -3.4 0M773.88 227.8a1.7 1.7 0 1 0 3.4 0a1.7 1.7 0 1 0 -3.4 0M777.83 227.7a1.7 1.7 0 1 0 3.4 0a1.7 1.7 0 1 0 -3.4 0M781.79 227.7a1.7 1.7 0 1 0 3.4 0a1.7 1.7 0 1 0 -3.4 0M785.75 223.3a1.7 1.7 0 1 0 3.4 0a1.7 1.7 0 1 0 -3.4 0M789.70 220.5a1.7 1.7 0 1 0 3.4 0a1.7 1.7 0 1 0 -3.4 0M793.65 216.2a1.7 1.7 0 1 0 3.4 0a1.7 1.7 0 1 0 -3.4 0M797.61 215.4a1.7 1.7 0 1 0 3.4 0a1.7 1.7 0 1 0 -3.4 0M801.56 214.1a1.7 1.7 0 1 0 3.4 0a1.7 1.7 0 1 0 -3.4 0M805.52 213.0a1.7 1.7 0 1 0 3.4 0a1.7 1.7 0 1 0 -3.4 0M809.48 213.8a1.7 1.7 0 1 0 3.4 0a1.7 1.7 0 1 0 -3.4 0M813.43 214.4a1.7 1.7 0 1 0 3.4 0a1.7 1.7 0 1 0 -3.4 0M817.38 216.0a1.7 1.7 0 1 0 3.4 0a1.7 1.7 0 1 0 -3.4 0M821.34 214.7a1.7 1.7 0 1 0 3.4 0a1.7 1.7 0 1 0 -3.4 0M825.29 215.0a1.7 1.7 0 1 0 3.4 0a1.7 1.7 0 1 0 -3.4 0M829.25 214.8a1.7 1.7 0 1 0 3.4 0a1.7 1.7 0 1 0 -3.4 0M833.20 216.9a1.7 1.7 0 1 0 3.4 0a1.7 1.7 0 1 0 -3.4 0M837.16 214.3a1.7 1.7 0 1 0 3.4 0a1.7 1.7 0 1 0 -3.4 0M841.12 215.2a1.7 1.7 0 1 0 3.4 0a1.7 1.7 0 1 0 -3.4 0M845.07 216.0a1.7 1.7 0 1 0 3.4 0a1.7 1.7 0 1 0 -3.4 0M849.02 218.0a1.7 1.7 0 1 0 3.4 0a1.7 1.7 0 1 0 -3.4 0M852.98 215.1a1.7 1.7 0 1 0 3.4 0a1.7 1.7 0 1 0 -3.4 0M856.93 215.1a1.7 1.7 0 1 0 3.4 0a1.7 1.7 0 1 0 -3.4 0M860.89 221.1a1.7 1.7 0 1 0 3.4 0a1.7 1.7 0 1 0 -3.4 0M864.84 222.0a1.7 1.7 0 1 0 3.4 0a1.7 1.7 0 1 0 -3.4 0M868.80 219.3a1.7 1.7 0 1 0 3.4 0a1.7 1.7 0 1 0 -3.4 0" fill="#0868c0"/>
<polyline points="83.5,185.5 87.4,185.5 91.4,185.5 95.3,185.5 99.3,185.5 103.2,185.5 107.2,185.5 111.1,185.5 115.1,185.5 119.0,185.5 123.0,186.5 127.0,186.5 130.9,186.5 134.9,186.5 138.8,186.5 142.8,186.5 146.7,186.5 150.7,186.5 154.6,186.5 158.6,186.5 162.6,186.5 166.5,186.5 170.5,186.5 174.4,186.5 178.4,186.5 182.3,186.5 186.3,186.5 190.2,186.5 194.2,186.5 198.2,186.5 202.1,186.5 206.1,186.5 210.0,186.5 214.0,186.5 217.9,186.5 221.9,186.5 225.8,186.5 229.8,186.5 233.7,186.5 237.7,186.5 241.7,186.5 245.6,186.5 249.6,186.5 253.5,186.5 257.5,186.5 261.4,186.5 265.4,186.5 269.3,186.5 273.3,186.5 277.2,186.5 281.2,187.5 285.2,187.5 289.1,187.5 293.1,187.5 297.0,187.5 301.0,187.5 304.9,187.5 308.9,187.5 312.8,187.5 316.8,187.5 320.8,187.5 324.7,187.5 328.7,187.5 332.6,187.5 336.6,187.5 340.5,187.5 344.5,187.5 348.4,187.5 352.4,187.5 356.4,187.5 360.3,187.5 364.3,187.5 368.2,187.5 372.2,187.5 376.1,187.5 380.1,187.5 384.0,187.5 388.0,187.5 391.9,187.5 395.9,187.5 399.9,187.5 403.8,187.5 407.8,187.5 411.7,187.5 415.7,187.5 419.6,187.5 423.6,188.5 427.5,188.5 431.5,188.5 435.4,188.5 439.4,188.5 443.4,188.5 447.3,188.5 451.3,188.5 455.2,188.5 459.2,188.5 463.1,188.5 467.1,188.5 471.0,188.5 475.0,188.5 479.0,188.5 482.9,188.5 486.9,188.5 490.8,188.5 494.8,188.5 498.7,188.5 502.7,188.5 506.6,188.5 510.6,188.5 514.5,188.5 518.5,188.5 522.5,188.5 526.4,188.5 530.4,188.5 534.3,188.5 538.3,188.5 542.2,188.5 546.2,188.5 550.1,188.5 554.1,188.5 558.1,188.5 562.0,188.5 566.0,188.5 569.9,188.5 573.9,189.5 577.8,189.5 581.8,189.5 585.7,189.5 589.7,189.5 593.6,189.5 597.6,189.5 601.6,189.5 605.5,189.5 609.5,189.5 613.4,189.5 617.4,189.5 621.3,189.5 625.3,189.5 629.2,189.5 633.2,189.5 637.2,189.5 641.1,189.5 645.1,189.5 649.0,189.5 653.0,189.5 656.9,189.5 660.9,189.5 664.8,189.5 668.8,189.5 672.8,189.5 676.7,189.5 680.7,189.5 684.6,189.5 688.6,189.5 692.5,189.5 696.5,189.5 700.4,189.5 704.4,189.5 708.3,189.5 712.3,189.5 716.3,189.5 720.2,189.5 724.2,189.5 728.1,189.5 732.1,189.5 736.0,189.5 740.0,189.5 743.9,190.5 747.9,190.5 751.9,190.5 755.8,190.5 759.8,190.5 763.7,190.5 767.7,190.5 771.6,190.5 775.6,190.5 779.5,190.5 783.5,190.5 787.4,190.5 791.4,190.5 795.4,190.5 799.3,190.5 803.3,190.5 807.2,190.5 811.2,190.5 815.1,190.5 819.1,190.5 823.0,190.5 827.0,190.5 831.0,190.5 834.9,190.5 838.9,190.5 842.8,190.5 846.8,190.5 850.7,190.5 854.7,190.5 858.6,190.5 862.6,190.5 866.5,190.5 870.5,190.5" fill="none" stroke="#edb120" stroke-width="1"/>
<path d="M81.95 185.5a1.5 1.5 0 1 0 3.0 0a1.5 1.5 0 1 0 -3.0 0M85.91 185.5a1.5 1.5 0 1 0 3.0 0a1.5 1.5 0 1 0 -3.0 0M89.86 185.5a1.5 1.5 0 1 0 3.0 0a1.5 1.5 0 1 0 -3.0 0M93.82 185.5a1.5 1.5 0 1 0 3.0 0a1.5 1.5 0 1 0 -3.0 0M97.78 185.5a1.5 1.5 0 1 0 3.0 0a1.5 1.5 0 1 0 -3.0 0M101.73 185.5a1.5 1.5 0 1 0 3.0 0a1.5 1.5 0 1 0 -3.0 0M105.69 185.5a1.5 1.5 0 1 0 3.0 0a1.5 1.5 0 1 0 -3.0 0M109.64 185.5a1.5 1.5 0 1 0 3.0 0a1.5 1.5 0 1 0 -3.0 0M113.59 185.5a1.5 1.5 0 1 0 3.0 0a1.5 1.5 0 1 0 -3.0 0M117.55 185.5a1.5 1.5 0 1 0 3.0 0a1.5 1.5 0 1 0 -3.0 0M121.50 186.5a1.5 1.5 0 1 0 3.0 0a1.5 1.5 0 1 0 -3.0 0M125.46 186.5a1.5 1.5 0 1 0 3.0 0a1.5 1.5 0 1 0 -3.0 0M129.41 186.5a1.5 1.5 0 1 0 3.0 0a1.5 1.5 0 1 0 -3.0 0M133.37 186.5a1.5 1.5 0 1 0 3.0 0a1.5 1.5 0 1 0 -3.0 0M137.32 186.5a1.5 1.5 0 1 0 3.0 0a1.5 1.5 0 1 0 -3.0 0M141.28 186.5a1.5 1.5 0 1 0 3.0 0a1.5 1.5 0 1 0 -3.0 0M145.24 186.5a1.5 1.5 0 1 0 3.0 0a1.5 1.5 0 1 0 -3.0 0M149.19 186.5a1.5 1.5 0 1 0 3.0 0a1.5 1.5 0 1 0 -3.0 0M153.14 186.5a1.5 1.5 0 1 0 3.0 0a1.5 1.5 0 1 0 -3.0 0M157.10 186.5a1.5 1.5 0 1 0 3.0 0a1.5 1.5 0 1 0 -3.0 0M161.06 186.5a1.5 1.5 0 1 0 3.0 0a1.5 1.5 0 1 0 -3.0 0M165.01 186.5a1.5 1.5 0 1 0 3.0 0a1.5 1.5 0 1 0 -3.0 0M168.97 186.5a1.5 1.5 0 1 0 3.0 0a1.5 1.5 0 1 0 -3.0 0M172.92 186.5a1.5 1.5 0 1 0 3.0 0a1.5 1.5 0 1 0 -3.0 0M176.88 186.5a1.5 1.5 0 1 0 3.0 0a1.5 1.5 0 1 0 -3.0 0M180.83 186.5a1.5 1.5 0 1 0 3.0 0a1.5 1.5 0 1 0 -3.0 0M184.78 186.5a1.5 1.5 0 1 0 3.0 0a1.5 1.5 0 1 0 -3.0 0M188.74 186.5a1.5 1.5 0 1 0 3.0 0a1.5 1.5 0 1 0 -3.0 0M192.69 186.5a1.5 1.5 0 1 0 3.0 0a1.5 1.5 0 1 0 -3.0 0M196.65 186.5a1.5 1.5 0 1 0 3.0 0a1.5 1.5 0 1 0 -3.0 0M200.61 186.5a1.5 1.5 0 1 0 3.0 0a1.5 1.5 0 1 0 -3.0 0M204.56 186.5a1.5 1.5 0 1 0 3.0 0a1.5 1.5 0 1 0 -3.0 0M208.52 186.5a1.5 1.5 0 1 0 3.0 0a1.5 1.5 0 1 0 -3.0 0M212.47 186.5a1.5 1.5 0 1 0 3.0 0a1.5 1.5 0 1 0 -3.0 0M216.43 186.5a1.5 1.5 0 1 0 3.0 0a1.5 1.5 0 1 0 -3.0 0M220.38 186.5a1.5 1.5 0 1 0 3.0 0a1.5 1.5 0 1 0 -3.0 0M224.34 186.5a1.5 1.5 0 1 0 3.0 0a1.5 1.5 0 1 0 -3.0 0M228.29 186.5a1.5 1.5 0 1 0 3.0 0a1.5 1.5 0 1 0 -3.0 0M232.25 186.5a1.5 1.5 0 1 0 3.0 0a1.5 1.5 0 1 0 -3.0 0M236.20 186.5a1.5 1.5 0 1 0 3.0 0a1.5 1.5 0 1 0 -3.0 0M240.16 186.5a1.5 1.5 0 1 0 3.0 0a1.5 1.5 0 1 0 -3.0 0M244.11 186.5a1.5 1.5 0 1 0 3.0 0a1.5 1.5 0 1 0 -3.0 0M248.06 186.5a1.5 1.5 0 1 0 3.0 0a1.5 1.5 0 1 0 -3.0 0M252.02 186.5a1.5 1.5 0 1 0 3.0 0a1.5 1.5 0 1 0 -3.0 0M255.98 186.5a1.5 1.5 0 1 0 3.0 0a1.5 1.5 0 1 0 -3.0 0M259.93 186.5a1.5 1.5 0 1 0 3.0 0a1.5 1.5 0 1 0 -3.0 0M263.88 186.5a1.5 1.5 0 1 0 3.0 0a1.5 1.5 0 1 0 -3.0 0M267.84 186.5a1.5 1.5 0 1 0 3.0 0a1.5 1.5 0 1 0 -3.0 0M271.80 186.5a1.5 1.5 0 1 0 3.0 0a1.5 1.5 0 1 0 -3.0 0M275.75 186.5a1.5 1.5 0 1 0 3.0 0a1.5 1.5 0 1 0 -3.0 0M279.71 187.5a1.5 1.5 0 1 0 3.0 0a1.5 1.5 0 1 0 -3.0 0M283.66 187.5a1.5 1.5 0 1 0 3.0 0a1.5 1.5 0 1 0 -3.0 0M287.62 187.5a1.5 1.5 0 1 0 3.0 0a1.5 1.5 0 1 0 -3.0 0M291.57 187.5a1.5 1.5 0 1 0 3.0 0a1.5 1.5 0 1 0 -3.0 0M295.52 187.5a1.5 1.5 0 1 0 3.0 0a1.5 1.5 0 1 0 -3.0 0M299.48 187.5a1.5 1.5 0 1 0 3.0 0a1.5 1.5 0 1 0 -3.0 0M303.44 187.5a1.5 1.5 0 1 0 3.0 0a1.5 1.5 0 1 0 -3.0 0M307.39 187.5a1.5 1.5 0 1 0 3.0 0a1.5 1.5 0 1 0 -3.0 0M311.35 187.5a1.5 1.5 0 1 0 3.0 0a1.5 1.5 0 1 0 -3.0 0M315.30 187.5a1.5 1.5 0 1 0 3.0 0a1.5 1.5 0 1 0 -3.0 0M319.25 187.5a1.5 1.5 0 1 0 3.0 0a1.5 1.5 0 1 0 -3.0 0M323.21 187.5a1.5 1.5 0 1 0 3.0 0a1.5 1.5 0 1 0 -3.0 0M327.16 187.5a1.5 1.5 0 1 0 3.0 0a1.5 1.5 0 1 0 -3.0 0M331.12 187.5a1.5 1.5 0 1 0 3.0 0a1.5 1.5 0 1 0 -3.0 0M335.07 187.5a1.5 1.5 0 1 0 3.0 0a1.5 1.5 0 1 0 -3.0 0M339.03 187.5a1.5 1.5 0 1 0 3.0 0a1.5 1.5 0 1 0 -3.0 0M342.99 187.5a1.5 1.5 0 1 0 3.0 0a1.5 1.5 0 1 0 -3.0 0M346.94 187.5a1.5 1.5 0 1 0 3.0 0a1.5 1.5 0 1 0 -3.0 0M350.89 187.5a1.5 1.5 0 1 0 3.0 0a1.5 1.5 0 1 0 -3.0 0M354.85 187.5a1.5 1.5 0 1 0 3.0 0a1.5 1.5 0 1 0 -3.0 0M358.81 187.5a1.5 1.5 0 1 0 3.0 0a1.5 1.5 0 1 0 -3.0 0M362.76 187.5a1.5 1.5 0 1 0 3.0 0a1.5 1.5 0 1 0 -3.0 0M366.72 187.5a1.5 1.5 0 1 0 3.0 0a1.5 1.5 0 1 0 -3.0 0M370.67 187.5a1.5 1.5 0 1 0 3.0 0a1.5 1.5 0 1 0 -3.0 0M374.62 187.5a1.5 1.5 0 1 0 3.0 0a1.5 1.5 0 1 0 -3.0 0M378.58 187.5a1.5 1.5 0 1 0 3.0 0a1.5 1.5 0 1 0 -3.0 0M382.54 187.5a1.5 1.5 0 1 0 3.0 0a1.5 1.5 0 1 0 -3.0 0M386.49 187.5a1.5 1.5 0 1 0 3.0 0a1.5 1.5 0 1 0 -3.0 0M390.44 187.5a1.5 1.5 0 1 0 3.0 0a1.5 1.5 0 1 0 -3.0 0M394.40 187.5a1.5 1.5 0 1 0 3.0 0a1.5 1.5 0 1 0 -3.0 0M398.36 187.5a1.5 1.5 0 1 0 3.0 0a1.5 1.5 0 1 0 -3.0 0M402.31 187.5a1.5 1.5 0 1 0 3.0 0a1.5 1.5 0 1 0 -3.0 0M406.26 187.5a1.5 1.5 0 1 0 3.0 0a1.5 1.5 0 1 0 -3.0 0M410.22 187.5a1.5 1.5 0 1 0 3.0 0a1.5 1.5 0 1 0 -3.0 0M414.18 187.5a1.5 1.5 0 1 0 3.0 0a1.5 1.5 0 1 0 -3.0 0M418.13 187.5a1.5 1.5 0 1 0 3.0 0a1.5 1.5 0 1 0 -3.0 0M422.08 188.5a1.5 1.5 0 1 0 3.0 0a1.5 1.5 0 1 0 -3.0 0M426.04 188.5a1.5 1.5 0 1 0 3.0 0a1.5 1.5 0 1 0 -3.0 0M430.00 188.5a1.5 1.5 0 1 0 3.0 0a1.5 1.5 0 1 0 -3.0 0M433.95 188.5a1.5 1.5 0 1 0 3.0 0a1.5 1.5 0 1 0 -3.0 0M437.91 188.5a1.5 1.5 0 1 0 3.0 0a1.5 1.5 0 1 0 -3.0 0M441.86 188.5a1.5 1.5 0 1 0 3.0 0a1.5 1.5 0 1 0 -3.0 0M445.81 188.5a1.5 1.5 0 1 0 3.0 0a1.5 1.5 0 1 0 -3.0 0M449.77 188.5a1.5 1.5 0 1 0 3.0 0a1.5 1.5 0 1 0 -3.0 0M453.73 188.5a1.5 1.5 0 1 0 3.0 0a1.5 1.5 0 1 0 -3.0 0M457.68 188.5a1.5 1.5 0 1 0 3.0 0a1.5 1.5 0 1 0 -3.0 0M461.63 188.5a1.5 1.5 0 1 0 3.0 0a1.5 1.5 0 1 0 -3.0 0M465.59 188.5a1.5 1.5 0 1 0 3.0 0a1.5 1.5 0 1 0 -3.0 0M469.55 188.5a1.5 1.5 0 1 0 3.0 0a1.5 1.5 0 1 0 -3.0 0M473.50 188.5a1.5 1.5 0 1 0 3.0 0a1.5 1.5 0 1 0 -3.0 0M477.45 188.5a1.5 1.5 0 1 0 3.0 0a1.5 1.5 0 1 0 -3.0 0M481.41 188.5a1.5 1.5 0 1 0 3.0 0a1.5 1.5 0 1 0 -3.0 0M485.37 188.5a1.5 1.5 0 1 0 3.0 0a1.5 1.5 0 1 0 -3.0 0M489.32 188.5a1.5 1.5 0 1 0 3.0 0a1.5 1.5 0 1 0 -3.0 0M493.28 188.5a1.5 1.5 0 1 0 3.0 0a1.5 1.5 0 1 0 -3.0 0M497.23 188.5a1.5 1.5 0 1 0 3.0 0a1.5 1.5 0 1 0 -3.0 0M501.19 188.5a1.5 1.5 0 1 0 3.0 0a1.5 1.5 0 1 0 -3.0 0M505.14 188.5a1.5 1.5 0 1 0 3.0 0a1.5 1.5 0 1 0 -3.0 0M509.10 188.5a1.5 1.5 0 1 0 3.0 0a1.5 1.5 0 1 0 -3.0 0M513.05 188.5a1.5 1.5 0 1 0 3.0 0a1.5 1.5 0 1 0 -3.0 0M517.00 188.5a1.5 1.5 0 1 0 3.0 0a1.5 1.5 0 1 0 -3.0 0M520.96 188.5a1.5 1.5 0 1 0 3.0 0a1.5 1.5 0 1 0 -3.0 0M524.91 188.5a1.5 1.5 0 1 0 3.0 0a1.5 1.5 0 1 0 -3.0 0M528.87 188.5a1.5 1.5 0 1 0 3.0 0a1.5 1.5 0 1 0 -3.0 0M532.83 188.5a1.5 1.5 0 1 0 3.0 0a1.5 1.5 0 1 0 -3.0 0M536.78 188.5a1.5 1.5 0 1 0 3.0 0a1.5 1.5 0 1 0 -3.0 0M540.74 188.5a1.5 1.5 0 1 0 3.0 0a1.5 1.5 0 1 0 -3.0 0M544.69 188.5a1.5 1.5 0 1 0 3.0 0a1.5 1.5 0 1 0 -3.0 0M548.64 188.5a1.5 1.5 0 1 0 3.0 0a1.5 1.5 0 1 0 -3.0 0M552.60 188.5a1.5 1.5 0 1 0 3.0 0a1.5 1.5 0 1 0 -3.0 0M556.56 188.5a1.5 1.5 0 1 0 3.0 0a1.5 1.5 0 1 0 -3.0 0M560.51 188.5a1.5 1.5 0 1 0 3.0 0a1.5 1.5 0 1 0 -3.0 0M564.47 188.5a1.5 1.5 0 1 0 3.0 0a1.5 1.5 0 1 0 -3.0 0M568.42 188.5a1.5 1.5 0 1 0 3.0 0a1.5 1.5 0 1 0 -3.0 0M572.38 189.5a1.5 1.5 0 1 0 3.0 0a1.5 1.5 0 1 0 -3.0 0M576.33 189.5a1.5 1.5 0 1 0 3.0 0a1.5 1.5 0 1 0 -3.0 0M580.29 189.5a1.5 1.5 0 1 0 3.0 0a1.5 1.5 0 1 0 -3.0 0M584.24 189.5a1.5 1.5 0 1 0 3.0 0a1.5 1.5 0 1 0 -3.0 0M588.19 189.5a1.5 1.5 0 1 0 3.0 0a1.5 1.5 0 1 0 -3.0 0M592.15 189.5a1.5 1.5 0 1 0 3.0 0a1.5 1.5 0 1 0 -3.0 0M596.11 189.5a1.5 1.5 0 1 0 3.0 0a1.5 1.5 0 1 0 -3.0 0M600.06 189.5a1.5 1.5 0 1 0 3.0 0a1.5 1.5 0 1 0 -3.0 0M604.01 189.5a1.5 1.5 0 1 0 3.0 0a1.5 1.5 0 1 0 -3.0 0M607.97 189.5a1.5 1.5 0 1 0 3.0 0a1.5 1.5 0 1 0 -3.0 0M611.92 189.5a1.5 1.5 0 1 0 3.0 0a1.5 1.5 0 1 0 -3.0 0M615.88 189.5a1.5 1.5 0 1 0 3.0 0a1.5 1.5 0 1 0 -3.0 0M619.84 189.5a1.5 1.5 0 1 0 3.0 0a1.5 1.5 0 1 0 -3.0 0M623.79 189.5a1.5 1.5 0 1 0 3.0 0a1.5 1.5 0 1 0 -3.0 0M627.75 189.5a1.5 1.5 0 1 0 3.0 0a1.5 1.5 0 1 0 -3.0 0M631.70 189.5a1.5 1.5 0 1 0 3.0 0a1.5 1.5 0 1 0 -3.0 0M635.65 189.5a1.5 1.5 0 1 0 3.0 0a1.5 1.5 0 1 0 -3.0 0M639.61 189.5a1.5 1.5 0 1 0 3.0 0a1.5 1.5 0 1 0 -3.0 0M643.57 189.5a1.5 1.5 0 1 0 3.0 0a1.5 1.5 0 1 0 -3.0 0M647.52 189.5a1.5 1.5 0 1 0 3.0 0a1.5 1.5 0 1 0 -3.0 0M651.48 189.5a1.5 1.5 0 1 0 3.0 0a1.5 1.5 0 1 0 -3.0 0M655.43 189.5a1.5 1.5 0 1 0 3.0 0a1.5 1.5 0 1 0 -3.0 0M659.38 189.5a1.5 1.5 0 1 0 3.0 0a1.5 1.5 0 1 0 -3.0 0M663.34 189.5a1.5 1.5 0 1 0 3.0 0a1.5 1.5 0 1 0 -3.0 0M667.29 189.5a1.5 1.5 0 1 0 3.0 0a1.5 1.5 0 1 0 -3.0 0M671.25 189.5a1.5 1.5 0 1 0 3.0 0a1.5 1.5 0 1 0 -3.0 0M675.21 189.5a1.5 1.5 0 1 0 3.0 0a1.5 1.5 0 1 0 -3.0 0M679.16 189.5a1.5 1.5 0 1 0 3.0 0a1.5 1.5 0 1 0 -3.0 0M683.12 189.5a1.5 1.5 0 1 0 3.0 0a1.5 1.5 0 1 0 -3.0 0M687.07 189.5a1.5 1.5 0 1 0 3.0 0a1.5 1.5 0 1 0 -3.0 0M691.02 189.5a1.5 1.5 0 1 0 3.0 0a1.5 1.5 0 1 0 -3.0 0M694.98 189.5a1.5 1.5 0 1 0 3.0 0a1.5 1.5 0 1 0 -3.0 0M698.94 189.5a1.5 1.5 0 1 0 3.0 0a1.5 1.5 0 1 0 -3.0 0M702.89 189.5a1.5 1.5 0 1 0 3.0 0a1.5 1.5 0 1 0 -3.0 0M706.85 189.5a1.5 1.5 0 1 0 3.0 0a1.5 1.5 0 1 0 -3.0 0M710.80 189.5a1.5 1.5 0 1 0 3.0 0a1.5 1.5 0 1 0 -3.0 0M714.75 189.5a1.5 1.5 0 1 0 3.0 0a1.5 1.5 0 1 0 -3.0 0M718.71 189.5a1.5 1.5 0 1 0 3.0 0a1.5 1.5 0 1 0 -3.0 0M722.66 189.5a1.5 1.5 0 1 0 3.0 0a1.5 1.5 0 1 0 -3.0 0M726.62 189.5a1.5 1.5 0 1 0 3.0 0a1.5 1.5 0 1 0 -3.0 0M730.58 189.5a1.5 1.5 0 1 0 3.0 0a1.5 1.5 0 1 0 -3.0 0M734.53 189.5a1.5 1.5 0 1 0 3.0 0a1.5 1.5 0 1 0 -3.0 0M738.49 189.5a1.5 1.5 0 1 0 3.0 0a1.5 1.5 0 1 0 -3.0 0M742.44 190.5a1.5 1.5 0 1 0 3.0 0a1.5 1.5 0 1 0 -3.0 0M746.39 190.5a1.5 1.5 0 1 0 3.0 0a1.5 1.5 0 1 0 -3.0 0M750.35 190.5a1.5 1.5 0 1 0 3.0 0a1.5 1.5 0 1 0 -3.0 0M754.31 190.5a1.5 1.5 0 1 0 3.0 0a1.5 1.5 0 1 0 -3.0 0M758.26 190.5a1.5 1.5 0 1 0 3.0 0a1.5 1.5 0 1 0 -3.0 0M762.22 190.5a1.5 1.5 0 1 0 3.0 0a1.5 1.5 0 1 0 -3.0 0M766.17 190.5a1.5 1.5 0 1 0 3.0 0a1.5 1.5 0 1 0 -3.0 0M770.12 190.5a1.5 1.5 0 1 0 3.0 0a1.5 1.5 0 1 0 -3.0 0M774.08 190.5a1.5 1.5 0 1 0 3.0 0a1.5 1.5 0 1 0 -3.0 0M778.03 190.5a1.5 1.5 0 1 0 3.0 0a1.5 1.5 0 1 0 -3.0 0M781.99 190.5a1.5 1.5 0 1 0 3.0 0a1.5 1.5 0 1 0 -3.0 0M785.95 190.5a1.5 1.5 0 1 0 3.0 0a1.5 1.5 0 1 0 -3.0 0M789.90 190.5a1.5 1.5 0 1 0 3.0 0a1.5 1.5 0 1 0 -3.0 0M793.86 190.5a1.5 1.5 0 1 0 3.0 0a1.5 1.5 0 1 0 -3.0 0M797.81 190.5a1.5 1.5 0 1 0 3.0 0a1.5 1.5 0 1 0 -3.0 0M801.76 190.5a1.5 1.5 0 1 0 3.0 0a1.5 1.5 0 1 0 -3.0 0M805.72 190.5a1.5 1.5 0 1 0 3.0 0a1.5 1.5 0 1 0 -3.0 0M809.68 190.5a1.5 1.5 0 1 0 3.0 0a1.5 1.5 0 1 0 -3.0 0M813.63 190.5a1.5 1.5 0 1 0 3.0 0a1.5 1.5 0 1 0 -3.0 0M817.59 190.5a1.5 1.5 0 1 0 3.0 0a1.5 1.5 0 1 0 -3.0 0M821.54 190.5a1.5 1.5 0 1 0 3.0 0a1.5 1.5 0 1 0 -3.0 0M825.50 190.5a1.5 1.5 0 1 0 3.0 0a1.5 1.5 0 1 0 -3.0 0M829.45 190.5a1.5 1.5 0 1 0 3.0 0a1.5 1.5 0 1 0 -3.0 0M833.40 190.5a1.5 1.5 0 1 0 3.0 0a1.5 1.5 0 1 0 -3.0 0M837.36 190.5a1.5 1.5 0 1 0 3.0 0a1.5 1.5 0 1 0 -3.0 0M841.32 190.5a1.5 1.5 0 1 0 3.0 0a1.5 1.5 0 1 0 -3.0 0M845.27 190.5a1.5 1.5 0 1 0 3.0 0a1.5 1.5 0 1 0 -3.0 0M849.23 190.5a1.5 1.5 0 1 0 3.0 0a1.5 1.5 0 1 0 -3.0 0M853.18 190.5a1.5 1.5 0 1 0 3.0 0a1.5 1.5 0 1 0 -3.0 0M857.13 190.5a1.5 1.5 0 1 0 3.0 0a1.5 1.5 0 1 0 -3.0 0M861.09 190.5a1.5 1.5 0 1 0 3.0 0a1.5 1.5 0 1 0 -3.0 0M865.04 190.5a1.5 1.5 0 1 0 3.0 0a1.5 1.5 0 1 0 -3.0 0M869.00 190.5a1.5 1.5 0 1 0 3.0 0a1.5 1.5 0 1 0 -3.0 0" fill="#edb120"/>
<path d="M470.5 274.5H479.5M475.0 270.0V279.0M471.82 271.32L478.18 277.68M471.82 277.68L478.18 271.32" stroke="#d4008f" stroke-width="1.3" fill="none"/>
<path d="M866.0 209.5H875.0M870.5 205.0V214.0M867.32 206.32L873.68 212.68M867.32 212.68L873.68 206.32" stroke="#d4008f" stroke-width="1.3" fill="none"/></svg>
<div class="t b" style="left:284px;top:103px;font-size:13.2px;color:#262626">Episode reward for rlSimplePendulumModel with rlSACAgent</div>
<div class="t" style="left:428px;top:796px;font-size:13px;color:#262626">Episode Number</div>
<div class="t" style="left:21px;top:497px;font-size:13px;color:#262626;transform:rotate(-90deg);transform-origin:0 0">Episode Reward</div>
<!-- divider -->
<div class="a" style="left:900px;top:59px;width:1px;height:771px;background:#bdbdbd"></div>

<!-- right panel -->
<div class="a" style="left:901px;top:59px;width:300px;height:771px;background:#f5f5f5"></div>
<div class="a" style="left:901px;top:59px;width:300px;height:22px;background:#ffffff"></div>
<div class="a" style="left:901px;top:81px;width:300px;height:1px;background:#c4c4c4"></div>
<div class="t" style="left:907px;top:63px;font-size:13px;color:#262626">Training Progress</div>
<div class="a" style="left:1182px;top:65px;width:2px;height:2px;background:#6a6a6a"></div>
<div class="a" style="left:1182px;top:70px;width:2px;height:2px;background:#6a6a6a"></div>
<div class="a" style="left:1182px;top:74px;width:2px;height:2px;background:#6a6a6a"></div>


<!-- progress -->
<div class="a" style="left:911px;top:97px;width:160px;height:15px;background:#ffffff"></div>
<div class="a" style="left:911px;top:97px;width:30px;height:15px;background:#2a88dd"></div>
<div class="a" style="left:1081px;top:92px;width:110px;height:25px;border:1px solid #bdbdbd;border-radius:4px;background:#f3f3f3"></div>
<div class="t f12" style="left:1091px;top:98px;color:#a0a0a0">Training stopped</div>
<div class="t f12" style="left:911px;top:129px">Episode number:</div>
<div class="t f12" style="left:1041px;top:129px">200/1000</div>
<div class="t f12" style="left:911px;top:154px">Start time:</div>
<div class="t f12" style="left:1041px;top:154px">06-Nov-2024 18:21:44</div>
<div class="t f12" style="left:911px;top:179px">Duration:</div>
<div class="t f12" style="left:1041px;top:179px">00:30:35</div>
<div class="t f12" style="left:911px;top:204px">Final result:</div>
<div class="t f12" style="left:1041px;top:203px">Training finished after all</div>
<div class="t f12" style="left:1041px;top:218px">agents reached stop</div>
<div class="t f12" style="left:1041px;top:233px">training criteria.</div>

<!-- training information panel -->
<div class="a" style="left:911px;top:258px;width:280px;height:295px;border:1px solid #828282"></div>
<div class="a" style="left:912px;top:278px;width:278px;height:1px;background:#828282"></div>
<div class="t f12 b" style="left:915px;top:262px">Training Information</div>
<div class="a" style="left:922px;top:289px;width:258px;height:95px;border:1px solid #8c8c8c;background:#ffffff"></div>
<div class="a" style="left:923px;top:290px;width:256px;height:26px;background:#f3f3f3"></div>
<div class="a" style="left:923px;top:316px;width:256px;height:1px;background:#8c8c8c"></div>
<div class="a" style="left:923px;top:317px;width:256px;height:24px;background:#2a88dd"></div>
<div class="a" style="left:923px;top:341px;width:256px;height:1px;background:#8c8c8c"></div>
<div class="a" style="left:1051px;top:290px;width:1px;height:51px;background:#8c8c8c"></div>
<div class="t f12 b" style="left:926px;top:298px">Agent</div>
<div class="t f12 b" style="left:1055px;top:298px">Status</div>
<div class="t f12" style="left:926px;top:321px;color:#ffffff;-webkit-text-stroke:0.35px #fff">rlSACAgent</div>
<div class="t f12" style="left:1055px;top:321px;color:#ffffff;-webkit-text-stroke:0.35px #fff">Training finished</div>
<div class="t f12 b" style="left:922px;top:396px">Episode Information (rlSACAgent):</div>
<div class="t f12" style="left:922px;top:421px">Episode reward:</div>
<div class="t f12" style="left:1042px;top:421px">-743.908</div>
<div class="t f12" style="left:922px;top:446px">Average reward:</div>
<div class="t f12" style="left:1042px;top:446px">-1027.4606</div>
<div class="t f12" style="left:922px;top:471px">Episode Q0:</div>
<div class="t f12" style="left:1042px;top:471px">-153.4469</div>
<div class="t f12" style="left:922px;top:496px">Evaluation statistic:</div>
<div class="t f12" style="left:1042px;top:496px">-740.3138</div>
<div class="a" style="left:1070px;top:519px;width:110px;height:23px;border:1px solid #7a7a7a;border-radius:4px;background:#f7f7f7"></div>
<div class="t f12" style="left:1086px;top:524px">More Details...</div>

<!-- plot options -->
<div class="a" style="left:911px;top:563px;width:280px;height:118px;border:1px solid #828282"></div>
<div class="a" style="left:912px;top:583px;width:278px;height:1px;background:#828282"></div>
<div class="t f12 b" style="left:915px;top:567px">Plot Options</div>
<div class="a" style="left:922px;top:595px;width:14px;height:14px;border:1px solid #333;background:#fff"></div>
<svg class="a" style="left:922px;top:595px" width="14" height="14" viewBox="0 0 14 14"><path d="M3 7.2 L5.6 10 L11 3.6" stroke="#111" stroke-width="1.7" fill="none"/></svg>
<div class="t f12" style="left:939px;top:596px">Show EpisodeQ0</div>
<div class="a" style="left:922px;top:622px;width:14px;height:14px;border:1px solid #333;background:#fff"></div>
<svg class="a" style="left:922px;top:622px" width="14" height="14" viewBox="0 0 14 14"><path d="M3 7.2 L5.6 10 L11 3.6" stroke="#111" stroke-width="1.7" fill="none"/></svg>
<div class="t f12" style="left:939px;top:623px">Show evaluation statistic</div>
<div class="a" style="left:922px;top:652px;width:14px;height:14px;border:1px solid #333;background:#fff"></div>
<div class="t f12" style="left:939px;top:652px">Show last N episodes</div>
<div class="a" style="left:1066px;top:647px;width:114px;height:23px;border:1px solid #d0d0d0;background:#f3f3f3"></div>
<div class="t f12" style="left:1148px;top:653px;color:#a8a8a8">1000</div>

<!-- legend -->
<div class="a" style="left:911px;top:691px;width:280px;height:102px;border:1px solid #828282"></div>
<div class="a" style="left:917px;top:697px;width:268px;height:90px;background:#ffffff"></div>
<svg class="a" style="left:960px;top:695px" width="60" height="90" viewBox="960 695 60 90">
 <path d="M973 704.5H1013" stroke="#28b4ec" stroke-width="1"/><circle cx="993" cy="704.5" r="1.5" fill="#28b4ec"/>
 <path d="M973 723.5H1013" stroke="#0868c0" stroke-width="1.4"/><circle cx="993" cy="723.5" r="1.7" fill="#0868c0"/>
 <path d="M973 742.5H1013" stroke="#edb120" stroke-width="1"/><circle cx="993" cy="742.5" r="1.4" fill="#edb120"/>
 <path d="M988 770.5H998M993 765.5V775.5M989.5 767L996.5 774M989.5 774L996.5 767" stroke="#d4008f" stroke-width="0.9" fill="none"/>
</svg>
<div class="t" style="left:1017px;top:699px;font-size:10.7px">Episode reward</div>
<div class="t" style="left:1017px;top:718px;font-size:10.7px">Average reward</div>
<div class="t" style="left:1017px;top:737px;font-size:10.7px">Episode Q0</div>
<div class="t" style="left:1017px;top:760px;font-size:10.7px">Evaluation statistic</div>
<div class="t" style="left:1017px;top:772px;font-size:10.7px">(MeanEpisodeReward)</div>

<!-- axes toolbar -->
<div class="a" style="left:1044px;top:693px;width:141px;height:22px;background:#ffffff"></div>
<svg class="a" style="left:1040px;top:690px" width="150" height="26" viewBox="1040 690 150 26" fill="none">
 <g stroke="#b4b4b4" stroke-width="1" stroke-linejoin="round">
  <path d="M1051 704.5H1047.5V708.5H1059.5V704.5H1057"/>
  <path d="M1049.8 706C1049.8 701.5 1051.5 699.2 1055.2 698.8V696.2L1059.6 699.4L1055.2 702.6V701C1052.8 701.3 1051.8 703 1051.8 706"/>
 </g>
 <path d="M1059.3 710L1063 706.3V710Z" fill="#9a9a9a"/>
 <g stroke="#6e6e6e" stroke-width="1">
  <path d="M1075.5 701.5V695.5H1079.5V701.5"/>
  <path d="M1073.5 701.5H1081.5V705.5H1073.5Z"/>
  <path d="M1073.5 703.8H1081.5"/>
  <path d="M1073.5 705.5C1072 708 1070 709.5 1068.5 710.5H1081.5V705.5"/>
 </g>
 <path d="M1071 710.5L1081.5 707.5V710.5Z" fill="#6e6e6e"/>
 <g stroke="#6e6e6e" stroke-width="1">
  <path d="M1089.5 695.5H1102.5V710.5H1089.5V704L1088 702.5L1089.5 701V695.5Z"/>
  <path d="M1092 701.5H1100M1092 704.5H1100"/>
 </g>
 <g stroke="#6e6e6e" stroke-width="1" stroke-linejoin="round">
  <path d="M1112 710.5L1107.6 703.6C1107.1 702.6 1108.3 701.6 1109.2 702.5L1110.4 704V698.8C1110.4 697 1113.2 697 1113.2 698.8V696.8C1113.2 695 1116.2 695 1116.2 696.8V697C1116.2 695.2 1119.2 695.2 1119.2 697V699C1119.2 697.2 1122.4 697.2 1122.4 699V705.5L1120.8 710.5Z"/>
  <path d="M1113.2 698.8V703M1116.2 697V703M1119.2 699V703"/>
 </g>
 <g stroke="#6e6e6e" stroke-width="1.1">
  <circle cx="1133.4" cy="701.4" r="5.6"/>
  <path d="M1137.4 705.4L1142.6 710.6M1130.3 701.4H1136.5M1133.4 698.3V704.5"/>
  <circle cx="1153.3" cy="701.4" r="5.6"/>
  <path d="M1157.3 705.4L1162.5 710.6M1150.2 701.4H1156.4"/>
 </g>
 <g stroke="#6e6e6e" stroke-width="1">
  <path d="M1167.2 703.3L1175 695.5L1182.8 703.3"/>
  <path d="M1169.5 702V710.5H1173.5V705.5H1176.5V710.5H1180.5V702"/>
 </g>
 <path d="M1178.3 696H1181.3V699Z" fill="#6e6e6e"/>
</svg>

<!-- status bar -->
<div class="a" style="left:1px;top:830px;width:899px;height:1px;background:#8e8e8e"></div>
<div class="a" style="left:900px;top:830px;width:301px;height:1px;background:#bfbfbf"></div>
<div class="a" style="left:1px;top:831px;width:1200px;height:22px;background:#e6e6e6"></div>
<div class="a" style="left:900px;top:830px;width:1px;height:23px;background:#c4c4c4"></div>
<div class="a" style="left:0;top:853px;width:1202px;height:1px;background:#a9adb2"></div>
<div class="a" style="left:63px;top:853px;width:50px;height:1px;background:#2f6aa8"></div>
<svg class="a" style="left:1185px;top:835px" width="12" height="14" viewBox="0 0 12 14"><path d="M1 1L8 7L1 13Z" fill="#8f8f8f"/><rect x="8" y="1" width="2" height="12" fill="#8f8f8f"/></svg>

</body></html>
